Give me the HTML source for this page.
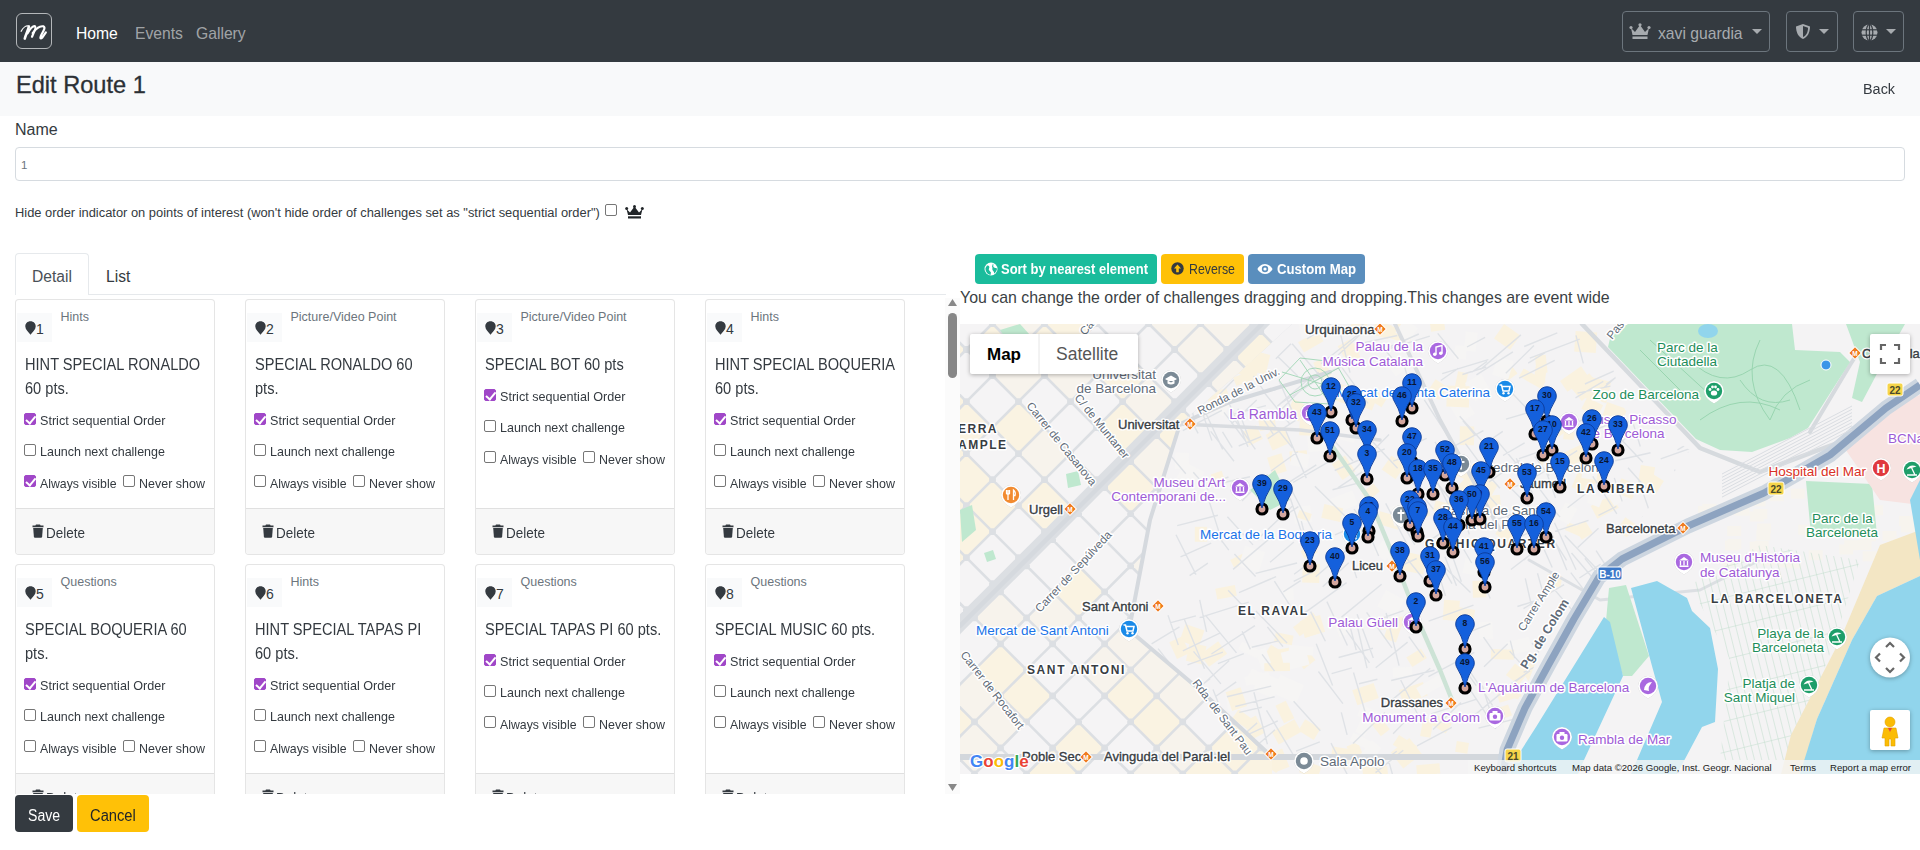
<!DOCTYPE html>
<html><head><meta charset="utf-8">
<style>
*{box-sizing:border-box;margin:0;padding:0}
html,body{width:1920px;height:850px;overflow:hidden;background:#fff;font-family:"Liberation Sans",sans-serif;color:#212529}
.a{position:absolute}
#nav{left:0;top:0;width:1920px;height:62px;background:#343a40}
#logo{left:16px;top:13px;width:36px;height:36px;border:1.6px solid #b4b7ba;border-radius:6px}
.nl{top:26px;font-size:15.7px;color:rgba(255,255,255,.55);white-space:nowrap}
.dd{top:11px;height:41px;border:1px solid #6c757d;border-radius:4px}
.caret{width:0;height:0;border-left:5px solid transparent;border-right:5px solid transparent;border-top:5.5px solid #a7abaf}
#hdr{left:0;top:62px;width:1920px;height:54px;background:#f8f9fa}
.cb{width:12px;height:12px;border:1.3px solid #767676;border-radius:2px;background:#fff}
.cb.on{background:#a047c8;border-color:#a047c8}
.cb.on::after{content:"";position:absolute;left:3.3px;top:0px;width:4px;height:7.5px;border:solid #fff;border-width:0 2.2px 2.2px 0;transform:rotate(40deg)}
.card{width:200px;height:256px;border:1px solid rgba(0,0,0,.1);border-radius:4px;background:#fff;overflow:hidden}
.card .ft{left:0;bottom:0;width:198px;height:46px;background:#f7f7f7;border-top:1px solid rgba(0,0,0,.09)}
.t{white-space:nowrap;line-height:1}
.btn{border-radius:4px;white-space:nowrap}
</style></head><body>
<!-- NAVBAR -->
<div id="nav" class="a">
  <div id="logo" class="a"></div>
  <svg class="a" style="left:12px;top:10px" width="44" height="42" viewBox="0 0 890 850"><g fill="none" stroke="#fff" stroke-linecap="round" stroke-linejoin="round">
  <path d="M185 430 C225 350,290 312,338 328" stroke-width="26"/>
  <path d="M342 335 C318 420,282 500,258 578" stroke-width="52"/>
  <path d="M315 470 C365 385,425 318,465 330 C492 345,462 420,405 540" stroke-width="46"/>
  <path d="M418 470 C485 375,565 315,640 332 C680 352,642 420,595 500 C565 555,562 598,612 560 L685 455" stroke-width="44"/>
  </g></svg>
  <div class="a nl t" style="left:76px;color:#fff">Home</div>
  <div class="a nl t" style="left:135px">Events</div>
  <div class="a nl t" style="left:196px">Gallery</div>
  <div class="a dd" style="left:1622px;width:148px"></div>
  <svg class="a" style="left:1629px;top:23px" width="22" height="17" viewBox="0 0 22 17"><path d="M2 5 L6 9 L11 2 L16 9 L20 5 L18.5 12 L3.5 12 Z" fill="#a7abaf"/><circle cx="2" cy="4.5" r="1.6" fill="#a7abaf"/><circle cx="11" cy="1.8" r="1.6" fill="#a7abaf"/><circle cx="20" cy="4.5" r="1.6" fill="#a7abaf"/><rect x="3.5" y="13.5" width="15" height="2.5" fill="#a7abaf"/></svg>
  <div class="a t" style="left:1658px;top:26px;font-size:15.7px;color:#a7abaf">xavi guardia</div>
  <div class="a caret" style="left:1752px;top:29px"></div>
  <div class="a dd" style="left:1786px;width:52px"></div>
  <svg class="a" style="left:1795px;top:23px" width="16" height="17" viewBox="0 0 16 17"><path d="M8 1 L15 3.5 C15 10,12 14.5,8 16 C4 14.5,1 10,1 3.5 Z" fill="#a7abaf"/><path d="M8 3 L13 4.8 C13 9.5,11 13,8 14 Z" fill="#343a40"/></svg>
  <div class="a caret" style="left:1819px;top:29px"></div>
  <div class="a dd" style="left:1853px;width:51px"></div>
  <svg class="a" style="left:1861px;top:24px" width="17" height="17" viewBox="0 0 17 17"><circle cx="8.5" cy="8.5" r="8" fill="#a7abaf"/><g stroke="#343a40" stroke-width="1.2" fill="none"><ellipse cx="8.5" cy="8.5" rx="3.3" ry="8"/><line x1="0.5" y1="5.8" x2="16.5" y2="5.8"/><line x1="0.5" y1="11.2" x2="16.5" y2="11.2"/><line x1="8.5" y1="0.5" x2="8.5" y2="16.5"/></g></svg>
  <div class="a caret" style="left:1886px;top:29px"></div>
</div>
<!-- HEADER -->
<div id="hdr" class="a"></div>
<div class="a t" style="left:16px;top:74px;font-size:23.6px;color:#2b3035;-webkit-text-stroke:0.3px #2b3035">Edit Route 1</div>
<div class="a t" style="left:1863px;top:80.5px;font-size:15.5px;color:#343a40;transform:scaleX(0.93);transform-origin:0 0">Back</div>
<!-- FORM -->
<div class="a t" style="left:15px;top:121.5px;font-size:16px;color:#343a40">Name</div>
<div class="a" style="left:15px;top:147px;width:1890px;height:34px;border:1px solid #d6dbe0;border-radius:4px;background:#fff"></div>
<div class="a t" style="left:21px;top:160px;font-size:11.5px;color:#6c757d">1</div>
<div class="a t" style="left:15px;top:207px;font-size:12.88px;color:#343a40">Hide order indicator on points of interest (won't hide order of challenges set as "strict sequential order")</div>
<div class="a cb" style="left:605px;top:204px"></div>
<svg class="a" style="left:625px;top:205px" width="19" height="14" viewBox="0 0 19 14"><path d="M1.5 4 L5 7.5 L9.5 1.5 L14 7.5 L17.5 4 L16 10 L3 10 Z" fill="#212529"/><circle cx="1.7" cy="3.6" r="1.5" fill="#212529"/><circle cx="9.5" cy="1.5" r="1.5" fill="#212529"/><circle cx="17.3" cy="3.6" r="1.5" fill="#212529"/><rect x="3" y="11.3" width="13" height="2.2" fill="#212529"/></svg>
<!-- TABS -->
<div class="a" style="left:15px;top:294px;width:931px;height:1px;background:#e6e9ec"></div>
<div class="a" style="left:15px;top:253px;width:74px;height:42px;border:1px solid #e6e9ec;border-bottom:none;border-radius:4px 4px 0 0;background:#fff"></div>
<div class="a t" style="left:32px;top:269px;font-size:15.6px;color:#495057">Detail</div>
<div class="a t" style="left:106px;top:269px;font-size:15.6px;color:#343a40">List</div>
<!-- SCROLL AREA -->
<div id="scroll" class="a" style="left:0;top:298px;width:960px;height:496px;overflow:hidden">
<div class="a card" style="left:15px;top:1px">
<div class="a" style="left:1px;top:13px;width:35px;height:29px;background:#f9fafb"></div>
<svg class="a" style="left:9px;top:21px" width="11" height="14" viewBox="0 0 11 14"><path d="M5.5 0.3 C8.6 0.3,10.7 2.5,10.7 5.4 C10.7 8.3,7.5 11,5.5 13.8 C3.5 11,0.3 8.3,0.3 5.4 C0.3 2.5,2.4 0.3,5.5 0.3 Z" fill="#343a40"/></svg>
<div class="a t" style="left:20px;top:21.5px;font-size:14px;color:#343a40">1</div>
<div class="a t" style="left:44.5px;top:11.2px;font-size:12.5px;color:#6c757d">Hints</div>
<div class="a t" style="left:9px;top:56.5px;font-size:16px;color:#343a40;transform:scaleX(0.912);transform-origin:0 0">HINT SPECIAL RONALDO</div>
<div class="a t" style="left:9px;top:80.5px;font-size:16px;color:#343a40;transform:scaleX(0.912);transform-origin:0 0">60 pts.</div>
<div class="a cb on" style="left:8px;top:112.5px"></div>
<div class="a t" style="left:24px;top:114.0px;font-size:13px;color:#343a40;transform:scaleX(0.97);transform-origin:0 0">Strict sequential Order</div>
<div class="a cb" style="left:8px;top:143.5px"></div>
<div class="a t" style="left:24px;top:145.0px;font-size:13px;color:#343a40;transform:scaleX(0.96);transform-origin:0 0">Launch next challenge</div>
<div class="a cb on" style="left:8px;top:175.4px"></div>
<div class="a t" style="left:24px;top:176.9px;font-size:13px;color:#343a40;transform:scaleX(0.945);transform-origin:0 0">Always visible</div>
<div class="a cb" style="left:106.5px;top:175.4px"></div>
<div class="a t" style="left:122.5px;top:176.9px;font-size:13px;color:#343a40;transform:scaleX(0.96);transform-origin:0 0">Never show</div>
<div class="a ft">
<svg class="a" style="left:16px;top:15px" width="12" height="14" viewBox="0 0 12 14"><path d="M4 0.5 H8 L8.6 1.6 H11.5 V3.3 H0.5 V1.6 H3.4 Z" fill="#343a40"/><path d="M1.2 4 H10.8 L10.1 13 C10 13.5,9.6 13.8,9.1 13.8 H2.9 C2.4 13.8,2 13.5,1.9 13 Z" fill="#343a40"/></svg>
<div class="a t" style="left:29.5px;top:17.3px;font-size:14.5px;color:#343a40;transform:scaleX(0.93);transform-origin:0 0">Delete</div>
</div>
</div>
<div class="a card" style="left:245px;top:1px">
<div class="a" style="left:1px;top:13px;width:35px;height:29px;background:#f9fafb"></div>
<svg class="a" style="left:9px;top:21px" width="11" height="14" viewBox="0 0 11 14"><path d="M5.5 0.3 C8.6 0.3,10.7 2.5,10.7 5.4 C10.7 8.3,7.5 11,5.5 13.8 C3.5 11,0.3 8.3,0.3 5.4 C0.3 2.5,2.4 0.3,5.5 0.3 Z" fill="#343a40"/></svg>
<div class="a t" style="left:20px;top:21.5px;font-size:14px;color:#343a40">2</div>
<div class="a t" style="left:44.5px;top:11.2px;font-size:12.5px;color:#6c757d">Picture/Video Point</div>
<div class="a t" style="left:9px;top:56.5px;font-size:16px;color:#343a40;transform:scaleX(0.912);transform-origin:0 0">SPECIAL RONALDO 60</div>
<div class="a t" style="left:9px;top:80.5px;font-size:16px;color:#343a40;transform:scaleX(0.912);transform-origin:0 0">pts.</div>
<div class="a cb on" style="left:8px;top:112.5px"></div>
<div class="a t" style="left:24px;top:114.0px;font-size:13px;color:#343a40;transform:scaleX(0.97);transform-origin:0 0">Strict sequential Order</div>
<div class="a cb" style="left:8px;top:143.5px"></div>
<div class="a t" style="left:24px;top:145.0px;font-size:13px;color:#343a40;transform:scaleX(0.96);transform-origin:0 0">Launch next challenge</div>
<div class="a cb" style="left:8px;top:175.4px"></div>
<div class="a t" style="left:24px;top:176.9px;font-size:13px;color:#343a40;transform:scaleX(0.945);transform-origin:0 0">Always visible</div>
<div class="a cb" style="left:106.5px;top:175.4px"></div>
<div class="a t" style="left:122.5px;top:176.9px;font-size:13px;color:#343a40;transform:scaleX(0.96);transform-origin:0 0">Never show</div>
<div class="a ft">
<svg class="a" style="left:16px;top:15px" width="12" height="14" viewBox="0 0 12 14"><path d="M4 0.5 H8 L8.6 1.6 H11.5 V3.3 H0.5 V1.6 H3.4 Z" fill="#343a40"/><path d="M1.2 4 H10.8 L10.1 13 C10 13.5,9.6 13.8,9.1 13.8 H2.9 C2.4 13.8,2 13.5,1.9 13 Z" fill="#343a40"/></svg>
<div class="a t" style="left:29.5px;top:17.3px;font-size:14.5px;color:#343a40;transform:scaleX(0.93);transform-origin:0 0">Delete</div>
</div>
</div>
<div class="a card" style="left:475px;top:1px">
<div class="a" style="left:1px;top:13px;width:35px;height:29px;background:#f9fafb"></div>
<svg class="a" style="left:9px;top:21px" width="11" height="14" viewBox="0 0 11 14"><path d="M5.5 0.3 C8.6 0.3,10.7 2.5,10.7 5.4 C10.7 8.3,7.5 11,5.5 13.8 C3.5 11,0.3 8.3,0.3 5.4 C0.3 2.5,2.4 0.3,5.5 0.3 Z" fill="#343a40"/></svg>
<div class="a t" style="left:20px;top:21.5px;font-size:14px;color:#343a40">3</div>
<div class="a t" style="left:44.5px;top:11.2px;font-size:12.5px;color:#6c757d">Picture/Video Point</div>
<div class="a t" style="left:9px;top:56.5px;font-size:16px;color:#343a40;transform:scaleX(0.912);transform-origin:0 0">SPECIAL BOT 60 pts</div>
<div class="a cb on" style="left:8px;top:88.5px"></div>
<div class="a t" style="left:24px;top:90.0px;font-size:13px;color:#343a40;transform:scaleX(0.97);transform-origin:0 0">Strict sequential Order</div>
<div class="a cb" style="left:8px;top:119.5px"></div>
<div class="a t" style="left:24px;top:121.0px;font-size:13px;color:#343a40;transform:scaleX(0.96);transform-origin:0 0">Launch next challenge</div>
<div class="a cb" style="left:8px;top:151.4px"></div>
<div class="a t" style="left:24px;top:152.9px;font-size:13px;color:#343a40;transform:scaleX(0.945);transform-origin:0 0">Always visible</div>
<div class="a cb" style="left:106.5px;top:151.4px"></div>
<div class="a t" style="left:122.5px;top:152.9px;font-size:13px;color:#343a40;transform:scaleX(0.96);transform-origin:0 0">Never show</div>
<div class="a ft">
<svg class="a" style="left:16px;top:15px" width="12" height="14" viewBox="0 0 12 14"><path d="M4 0.5 H8 L8.6 1.6 H11.5 V3.3 H0.5 V1.6 H3.4 Z" fill="#343a40"/><path d="M1.2 4 H10.8 L10.1 13 C10 13.5,9.6 13.8,9.1 13.8 H2.9 C2.4 13.8,2 13.5,1.9 13 Z" fill="#343a40"/></svg>
<div class="a t" style="left:29.5px;top:17.3px;font-size:14.5px;color:#343a40;transform:scaleX(0.93);transform-origin:0 0">Delete</div>
</div>
</div>
<div class="a card" style="left:705px;top:1px">
<div class="a" style="left:1px;top:13px;width:35px;height:29px;background:#f9fafb"></div>
<svg class="a" style="left:9px;top:21px" width="11" height="14" viewBox="0 0 11 14"><path d="M5.5 0.3 C8.6 0.3,10.7 2.5,10.7 5.4 C10.7 8.3,7.5 11,5.5 13.8 C3.5 11,0.3 8.3,0.3 5.4 C0.3 2.5,2.4 0.3,5.5 0.3 Z" fill="#343a40"/></svg>
<div class="a t" style="left:20px;top:21.5px;font-size:14px;color:#343a40">4</div>
<div class="a t" style="left:44.5px;top:11.2px;font-size:12.5px;color:#6c757d">Hints</div>
<div class="a t" style="left:9px;top:56.5px;font-size:16px;color:#343a40;transform:scaleX(0.912);transform-origin:0 0">HINT SPECIAL BOQUERIA</div>
<div class="a t" style="left:9px;top:80.5px;font-size:16px;color:#343a40;transform:scaleX(0.912);transform-origin:0 0">60 pts.</div>
<div class="a cb on" style="left:8px;top:112.5px"></div>
<div class="a t" style="left:24px;top:114.0px;font-size:13px;color:#343a40;transform:scaleX(0.97);transform-origin:0 0">Strict sequential Order</div>
<div class="a cb" style="left:8px;top:143.5px"></div>
<div class="a t" style="left:24px;top:145.0px;font-size:13px;color:#343a40;transform:scaleX(0.96);transform-origin:0 0">Launch next challenge</div>
<div class="a cb" style="left:8px;top:175.4px"></div>
<div class="a t" style="left:24px;top:176.9px;font-size:13px;color:#343a40;transform:scaleX(0.945);transform-origin:0 0">Always visible</div>
<div class="a cb" style="left:106.5px;top:175.4px"></div>
<div class="a t" style="left:122.5px;top:176.9px;font-size:13px;color:#343a40;transform:scaleX(0.96);transform-origin:0 0">Never show</div>
<div class="a ft">
<svg class="a" style="left:16px;top:15px" width="12" height="14" viewBox="0 0 12 14"><path d="M4 0.5 H8 L8.6 1.6 H11.5 V3.3 H0.5 V1.6 H3.4 Z" fill="#343a40"/><path d="M1.2 4 H10.8 L10.1 13 C10 13.5,9.6 13.8,9.1 13.8 H2.9 C2.4 13.8,2 13.5,1.9 13 Z" fill="#343a40"/></svg>
<div class="a t" style="left:29.5px;top:17.3px;font-size:14.5px;color:#343a40;transform:scaleX(0.93);transform-origin:0 0">Delete</div>
</div>
</div>
<div class="a card" style="left:15px;top:266px">
<div class="a" style="left:1px;top:13px;width:35px;height:29px;background:#f9fafb"></div>
<svg class="a" style="left:9px;top:21px" width="11" height="14" viewBox="0 0 11 14"><path d="M5.5 0.3 C8.6 0.3,10.7 2.5,10.7 5.4 C10.7 8.3,7.5 11,5.5 13.8 C3.5 11,0.3 8.3,0.3 5.4 C0.3 2.5,2.4 0.3,5.5 0.3 Z" fill="#343a40"/></svg>
<div class="a t" style="left:20px;top:21.5px;font-size:14px;color:#343a40">5</div>
<div class="a t" style="left:44.5px;top:11.2px;font-size:12.5px;color:#6c757d">Questions</div>
<div class="a t" style="left:9px;top:56.5px;font-size:16px;color:#343a40;transform:scaleX(0.912);transform-origin:0 0">SPECIAL BOQUERIA 60</div>
<div class="a t" style="left:9px;top:80.5px;font-size:16px;color:#343a40;transform:scaleX(0.912);transform-origin:0 0">pts.</div>
<div class="a cb on" style="left:8px;top:112.5px"></div>
<div class="a t" style="left:24px;top:114.0px;font-size:13px;color:#343a40;transform:scaleX(0.97);transform-origin:0 0">Strict sequential Order</div>
<div class="a cb" style="left:8px;top:143.5px"></div>
<div class="a t" style="left:24px;top:145.0px;font-size:13px;color:#343a40;transform:scaleX(0.96);transform-origin:0 0">Launch next challenge</div>
<div class="a cb" style="left:8px;top:175.4px"></div>
<div class="a t" style="left:24px;top:176.9px;font-size:13px;color:#343a40;transform:scaleX(0.945);transform-origin:0 0">Always visible</div>
<div class="a cb" style="left:106.5px;top:175.4px"></div>
<div class="a t" style="left:122.5px;top:176.9px;font-size:13px;color:#343a40;transform:scaleX(0.96);transform-origin:0 0">Never show</div>
<div class="a ft">
<svg class="a" style="left:16px;top:15px" width="12" height="14" viewBox="0 0 12 14"><path d="M4 0.5 H8 L8.6 1.6 H11.5 V3.3 H0.5 V1.6 H3.4 Z" fill="#343a40"/><path d="M1.2 4 H10.8 L10.1 13 C10 13.5,9.6 13.8,9.1 13.8 H2.9 C2.4 13.8,2 13.5,1.9 13 Z" fill="#343a40"/></svg>
<div class="a t" style="left:29.5px;top:17.3px;font-size:14.5px;color:#343a40;transform:scaleX(0.93);transform-origin:0 0">Delete</div>
</div>
</div>
<div class="a card" style="left:245px;top:266px">
<div class="a" style="left:1px;top:13px;width:35px;height:29px;background:#f9fafb"></div>
<svg class="a" style="left:9px;top:21px" width="11" height="14" viewBox="0 0 11 14"><path d="M5.5 0.3 C8.6 0.3,10.7 2.5,10.7 5.4 C10.7 8.3,7.5 11,5.5 13.8 C3.5 11,0.3 8.3,0.3 5.4 C0.3 2.5,2.4 0.3,5.5 0.3 Z" fill="#343a40"/></svg>
<div class="a t" style="left:20px;top:21.5px;font-size:14px;color:#343a40">6</div>
<div class="a t" style="left:44.5px;top:11.2px;font-size:12.5px;color:#6c757d">Hints</div>
<div class="a t" style="left:9px;top:56.5px;font-size:16px;color:#343a40;transform:scaleX(0.912);transform-origin:0 0">HINT SPECIAL TAPAS PI</div>
<div class="a t" style="left:9px;top:80.5px;font-size:16px;color:#343a40;transform:scaleX(0.912);transform-origin:0 0">60 pts.</div>
<div class="a cb on" style="left:8px;top:112.5px"></div>
<div class="a t" style="left:24px;top:114.0px;font-size:13px;color:#343a40;transform:scaleX(0.97);transform-origin:0 0">Strict sequential Order</div>
<div class="a cb" style="left:8px;top:143.5px"></div>
<div class="a t" style="left:24px;top:145.0px;font-size:13px;color:#343a40;transform:scaleX(0.96);transform-origin:0 0">Launch next challenge</div>
<div class="a cb" style="left:8px;top:175.4px"></div>
<div class="a t" style="left:24px;top:176.9px;font-size:13px;color:#343a40;transform:scaleX(0.945);transform-origin:0 0">Always visible</div>
<div class="a cb" style="left:106.5px;top:175.4px"></div>
<div class="a t" style="left:122.5px;top:176.9px;font-size:13px;color:#343a40;transform:scaleX(0.96);transform-origin:0 0">Never show</div>
<div class="a ft">
<svg class="a" style="left:16px;top:15px" width="12" height="14" viewBox="0 0 12 14"><path d="M4 0.5 H8 L8.6 1.6 H11.5 V3.3 H0.5 V1.6 H3.4 Z" fill="#343a40"/><path d="M1.2 4 H10.8 L10.1 13 C10 13.5,9.6 13.8,9.1 13.8 H2.9 C2.4 13.8,2 13.5,1.9 13 Z" fill="#343a40"/></svg>
<div class="a t" style="left:29.5px;top:17.3px;font-size:14.5px;color:#343a40;transform:scaleX(0.93);transform-origin:0 0">Delete</div>
</div>
</div>
<div class="a card" style="left:475px;top:266px">
<div class="a" style="left:1px;top:13px;width:35px;height:29px;background:#f9fafb"></div>
<svg class="a" style="left:9px;top:21px" width="11" height="14" viewBox="0 0 11 14"><path d="M5.5 0.3 C8.6 0.3,10.7 2.5,10.7 5.4 C10.7 8.3,7.5 11,5.5 13.8 C3.5 11,0.3 8.3,0.3 5.4 C0.3 2.5,2.4 0.3,5.5 0.3 Z" fill="#343a40"/></svg>
<div class="a t" style="left:20px;top:21.5px;font-size:14px;color:#343a40">7</div>
<div class="a t" style="left:44.5px;top:11.2px;font-size:12.5px;color:#6c757d">Questions</div>
<div class="a t" style="left:9px;top:56.5px;font-size:16px;color:#343a40;transform:scaleX(0.912);transform-origin:0 0">SPECIAL TAPAS PI 60 pts.</div>
<div class="a cb on" style="left:8px;top:88.5px"></div>
<div class="a t" style="left:24px;top:90.0px;font-size:13px;color:#343a40;transform:scaleX(0.97);transform-origin:0 0">Strict sequential Order</div>
<div class="a cb" style="left:8px;top:119.5px"></div>
<div class="a t" style="left:24px;top:121.0px;font-size:13px;color:#343a40;transform:scaleX(0.96);transform-origin:0 0">Launch next challenge</div>
<div class="a cb" style="left:8px;top:151.4px"></div>
<div class="a t" style="left:24px;top:152.9px;font-size:13px;color:#343a40;transform:scaleX(0.945);transform-origin:0 0">Always visible</div>
<div class="a cb" style="left:106.5px;top:151.4px"></div>
<div class="a t" style="left:122.5px;top:152.9px;font-size:13px;color:#343a40;transform:scaleX(0.96);transform-origin:0 0">Never show</div>
<div class="a ft">
<svg class="a" style="left:16px;top:15px" width="12" height="14" viewBox="0 0 12 14"><path d="M4 0.5 H8 L8.6 1.6 H11.5 V3.3 H0.5 V1.6 H3.4 Z" fill="#343a40"/><path d="M1.2 4 H10.8 L10.1 13 C10 13.5,9.6 13.8,9.1 13.8 H2.9 C2.4 13.8,2 13.5,1.9 13 Z" fill="#343a40"/></svg>
<div class="a t" style="left:29.5px;top:17.3px;font-size:14.5px;color:#343a40;transform:scaleX(0.93);transform-origin:0 0">Delete</div>
</div>
</div>
<div class="a card" style="left:705px;top:266px">
<div class="a" style="left:1px;top:13px;width:35px;height:29px;background:#f9fafb"></div>
<svg class="a" style="left:9px;top:21px" width="11" height="14" viewBox="0 0 11 14"><path d="M5.5 0.3 C8.6 0.3,10.7 2.5,10.7 5.4 C10.7 8.3,7.5 11,5.5 13.8 C3.5 11,0.3 8.3,0.3 5.4 C0.3 2.5,2.4 0.3,5.5 0.3 Z" fill="#343a40"/></svg>
<div class="a t" style="left:20px;top:21.5px;font-size:14px;color:#343a40">8</div>
<div class="a t" style="left:44.5px;top:11.2px;font-size:12.5px;color:#6c757d">Questions</div>
<div class="a t" style="left:9px;top:56.5px;font-size:16px;color:#343a40;transform:scaleX(0.912);transform-origin:0 0">SPECIAL MUSIC 60 pts.</div>
<div class="a cb on" style="left:8px;top:88.5px"></div>
<div class="a t" style="left:24px;top:90.0px;font-size:13px;color:#343a40;transform:scaleX(0.97);transform-origin:0 0">Strict sequential Order</div>
<div class="a cb" style="left:8px;top:119.5px"></div>
<div class="a t" style="left:24px;top:121.0px;font-size:13px;color:#343a40;transform:scaleX(0.96);transform-origin:0 0">Launch next challenge</div>
<div class="a cb" style="left:8px;top:151.4px"></div>
<div class="a t" style="left:24px;top:152.9px;font-size:13px;color:#343a40;transform:scaleX(0.945);transform-origin:0 0">Always visible</div>
<div class="a cb" style="left:106.5px;top:151.4px"></div>
<div class="a t" style="left:122.5px;top:152.9px;font-size:13px;color:#343a40;transform:scaleX(0.96);transform-origin:0 0">Never show</div>
<div class="a ft">
<svg class="a" style="left:16px;top:15px" width="12" height="14" viewBox="0 0 12 14"><path d="M4 0.5 H8 L8.6 1.6 H11.5 V3.3 H0.5 V1.6 H3.4 Z" fill="#343a40"/><path d="M1.2 4 H10.8 L10.1 13 C10 13.5,9.6 13.8,9.1 13.8 H2.9 C2.4 13.8,2 13.5,1.9 13 Z" fill="#343a40"/></svg>
<div class="a t" style="left:29.5px;top:17.3px;font-size:14.5px;color:#343a40;transform:scaleX(0.93);transform-origin:0 0">Delete</div>
</div>
</div>
</div>
<!-- scrollbar -->
<div class="a" style="left:945px;top:298px;width:15px;height:496px;background:#fbfbfb"></div>
<svg class="a" style="left:947px;top:298px" width="11" height="10"><path d="M5.5 1 L10 8 L1 8 Z" fill="#888"/></svg>
<div class="a" style="left:948px;top:313px;width:9px;height:65px;border-radius:5px;background:#878787"></div>
<svg class="a" style="left:947px;top:783px" width="11" height="10"><path d="M1 1 L10 1 L5.5 8 Z" fill="#888"/></svg>
<!-- BUTTONS -->
<div class="a btn" style="left:15px;top:795px;width:58px;height:37px;background:#343a40"></div>
<div class="a t" style="left:28px;top:807.5px;font-size:16px;color:#fff;transform:scaleX(0.88);transform-origin:0 0">Save</div>
<div class="a btn" style="left:77px;top:795px;width:72px;height:37px;background:#ffc107"></div>
<div class="a t" style="left:90px;top:807.5px;font-size:16px;color:#212529;transform:scaleX(0.92);transform-origin:0 0">Cancel</div>
<!-- RIGHT TOOLS -->
<div class="a btn" style="left:975px;top:254px;width:182px;height:30px;background:#1abc9c"></div>
<svg class="a" style="left:984px;top:262px" width="14" height="14" viewBox="0 0 14 14"><circle cx="7" cy="7" r="6.5" fill="#fff"/><path d="M3 3.5 C5 3,6 5,5 6.5 C4 8,6 9,7 10.5 L6.5 13 C3 12,1.2 9,1.5 6 Z M9 1.5 C10 3,8.5 4.5,10 5.5 C11.5 6.5,12.5 5,13 7 C12.5 9.5,11 11,10 11.5 C10.5 9.5,9 9,8.5 8 C8 6.5,9 6,8 4.5 Z" fill="#1abc9c"/></svg>
<div class="a t" style="left:1001px;top:261.8px;font-size:14.5px;font-weight:bold;color:#fff;transform:scaleX(0.894);transform-origin:0 0">Sort by nearest element</div>
<div class="a btn" style="left:1161px;top:254px;width:83px;height:30px;background:#ffc107"></div>
<svg class="a" style="left:1171px;top:262px" width="13" height="13" viewBox="0 0 13 13"><circle cx="6.5" cy="6.5" r="6.2" fill="#343a40"/><path d="M6.5 2.6 L10 6.4 L7.8 6.4 L7.8 10.2 L5.2 10.2 L5.2 6.4 L3 6.4 Z" fill="#ffc107"/></svg>
<div class="a t" style="left:1188.5px;top:261.8px;font-size:14.5px;color:#343a40;transform:scaleX(0.85);transform-origin:0 0">Reverse</div>
<div class="a btn" style="left:1248px;top:254px;width:117px;height:30px;background:#5a8ebd"></div>
<svg class="a" style="left:1257px;top:263px" width="16" height="12" viewBox="0 0 16 12"><path d="M8 1 C12 1,15 4.5,15.5 6 C15 7.5,12 11,8 11 C4 11,1 7.5,0.5 6 C1 4.5,4 1,8 1 Z" fill="#fff"/><circle cx="8" cy="6" r="3.2" fill="#5a8ebd"/><circle cx="8" cy="6" r="1.6" fill="#fff"/></svg>
<div class="a t" style="left:1276.5px;top:261.8px;font-size:14.5px;font-weight:bold;color:#fff;transform:scaleX(0.908);transform-origin:0 0">Custom Map</div>
<div class="a t" style="left:960px;top:290.3px;font-size:15.9px;color:#3a3f44">You can change the order of challenges dragging and dropping.This changes are event wide</div>
<!-- MAP -->
<div id="map" class="a" style="left:960px;top:324px;width:960px;height:450px;overflow:hidden;background:#f2f1f2">
<svg class="a" style="left:0;top:0" width="960" height="450" viewBox="0 0 960 450" font-family="Liberation Sans, sans-serif">
<defs>
<pattern id="grid" patternUnits="userSpaceOnUse" width="37" height="37" patternTransform="rotate(45)">
<rect width="37" height="37" fill="none"/>
<path d="M0 0 H37 M0 0 V37" stroke="#d9dde2" stroke-width="2.2"/>
</pattern>
<pattern id="bgrid" patternUnits="userSpaceOnUse" width="7" height="30" patternTransform="rotate(-14)">
<path d="M0 0 V30 M0 0 H7" stroke="#c2decd" stroke-width="1.1"/>
</pattern>
</defs>
<rect width="960" height="450" fill="#f4f3f4"/>
<clipPath id="eix"><polygon points="0.0,0.0 332.0,0.0 280.0,48.0 220.0,100.0 190.0,196.0 169.0,306.0 240.0,366.0 312.0,433.0 312.0,450.0 0.0,450.0"/></clipPath>
<g clip-path="url(#eix)">
<rect width="960" height="450" fill="#dcdfe3"/>
<polygon points="-18.0,-49.1 3.0,-28.1 3.0,-25.0 -18.0,-3.9 -21.1,-3.9 -42.2,-25.0 -42.2,-28.1 -21.1,-49.1" fill="#f7f3ec"/>
<polygon points="34.0,-49.1 55.1,-28.1 55.1,-25.0 34.0,-3.9 30.9,-3.9 9.8,-25.0 9.8,-28.1 30.9,-49.1" fill="#faf3e2"/>
<polygon points="8.0,-23.1 29.1,-2.1 29.1,1.1 8.0,22.1 4.9,22.1 -16.2,1.1 -16.2,-2.1 4.9,-23.1" fill="#f5f4f5"/>
<polygon points="-18.0,2.9 3.0,24.0 3.0,27.1 -18.0,48.2 -21.1,48.2 -42.2,27.1 -42.2,24.0 -21.1,2.9" fill="#faf3e2"/>
<polygon points="86.1,-49.1 107.1,-28.1 107.1,-25.0 86.1,-3.9 82.9,-3.9 61.9,-25.0 61.9,-28.1 82.9,-49.1" fill="#f5f4f5"/>
<polygon points="60.0,-23.1 81.1,-2.1 81.1,1.1 60.0,22.1 56.9,22.1 35.9,1.1 35.9,-2.1 56.9,-23.1" fill="#f7f3ec"/>
<polygon points="34.0,2.9 55.1,24.0 55.1,27.1 34.0,48.2 30.9,48.2 9.8,27.1 9.8,24.0 30.9,2.9" fill="#faf3e2"/>
<polygon points="8.0,28.9 29.1,50.0 29.1,53.1 8.0,74.2 4.9,74.2 -16.2,53.1 -16.2,50.0 4.9,28.9" fill="#f5f4f5"/>
<polygon points="-18.0,54.9 3.0,76.0 3.0,79.1 -18.0,100.2 -21.1,100.2 -42.2,79.1 -42.2,76.0 -21.1,54.9" fill="#faf3e2"/>
<polygon points="138.1,-49.1 159.2,-28.1 159.2,-25.0 138.1,-3.9 135.0,-3.9 113.9,-25.0 113.9,-28.1 135.0,-49.1" fill="#f7f3ec"/>
<polygon points="112.1,-23.1 133.1,-2.1 133.1,1.1 112.1,22.1 109.0,22.1 87.9,1.1 87.9,-2.1 109.0,-23.1" fill="#faf3e2"/>
<polygon points="86.1,2.9 107.1,24.0 107.1,27.1 86.1,48.2 82.9,48.2 61.9,27.1 61.9,24.0 82.9,2.9" fill="#faf3e2"/>
<polygon points="60.0,28.9 81.1,50.0 81.1,53.1 60.0,74.2 56.9,74.2 35.9,53.1 35.9,50.0 56.9,28.9" fill="#f7f3ec"/>
<polygon points="34.0,54.9 55.1,76.0 55.1,79.1 34.0,100.2 30.9,100.2 9.8,79.1 9.8,76.0 30.9,54.9" fill="#f5f4f5"/>
<polygon points="8.0,81.0 29.1,102.0 29.1,105.1 8.0,126.2 4.9,126.2 -16.2,105.1 -16.2,102.0 4.9,81.0" fill="#faf3e2"/>
<polygon points="-18.0,107.0 3.0,128.1 3.0,131.2 -18.0,152.2 -21.1,152.2 -42.2,131.2 -42.2,128.1 -21.1,107.0" fill="#faf3e2"/>
<polygon points="190.1,-49.1 211.2,-28.1 211.2,-25.0 190.1,-3.9 187.0,-3.9 166.0,-25.0 166.0,-28.1 187.0,-49.1" fill="#f5f4f5"/>
<polygon points="164.1,-23.1 185.2,-2.1 185.2,1.1 164.1,22.1 161.0,22.1 139.9,1.1 139.9,-2.1 161.0,-23.1" fill="#f5f4f5"/>
<polygon points="138.1,2.9 159.2,24.0 159.2,27.1 138.1,48.2 135.0,48.2 113.9,27.1 113.9,24.0 135.0,2.9" fill="#f5f4f5"/>
<polygon points="112.1,28.9 133.1,50.0 133.1,53.1 112.1,74.2 109.0,74.2 87.9,53.1 87.9,50.0 109.0,28.9" fill="#f7f3ec"/>
<polygon points="86.1,54.9 107.1,76.0 107.1,79.1 86.1,100.2 82.9,100.2 61.9,79.1 61.9,76.0 82.9,54.9" fill="#f5f4f5"/>
<polygon points="60.0,81.0 81.1,102.0 81.1,105.1 60.0,126.2 56.9,126.2 35.9,105.1 35.9,102.0 56.9,81.0" fill="#faf3e2"/>
<polygon points="34.0,107.0 55.1,128.1 55.1,131.2 34.0,152.2 30.9,152.2 9.8,131.2 9.8,128.1 30.9,107.0" fill="#f5f4f5"/>
<polygon points="8.0,133.0 29.1,154.1 29.1,157.2 8.0,178.3 4.9,178.3 -16.2,157.2 -16.2,154.1 4.9,133.0" fill="#faf3e2"/>
<polygon points="-18.0,159.0 3.0,180.1 3.0,183.2 -18.0,204.3 -21.1,204.3 -42.2,183.2 -42.2,180.1 -21.1,159.0" fill="#faf3e2"/>
<polygon points="242.2,-49.1 263.3,-28.1 263.3,-25.0 242.2,-3.9 239.1,-3.9 218.0,-25.0 218.0,-28.1 239.1,-49.1" fill="#faf3e2"/>
<polygon points="216.2,-23.1 237.2,-2.1 237.2,1.1 216.2,22.1 213.1,22.1 192.0,1.1 192.0,-2.1 213.1,-23.1" fill="#f7f3ec"/>
<polygon points="190.1,2.9 211.2,24.0 211.2,27.1 190.1,48.2 187.0,48.2 166.0,27.1 166.0,24.0 187.0,2.9" fill="#f5f4f5"/>
<polygon points="164.1,28.9 185.2,50.0 185.2,53.1 164.1,74.2 161.0,74.2 139.9,53.1 139.9,50.0 161.0,28.9" fill="#faf3e2"/>
<polygon points="138.1,54.9 159.2,76.0 159.2,79.1 138.1,100.2 135.0,100.2 113.9,79.1 113.9,76.0 135.0,54.9" fill="#f5f4f5"/>
<polygon points="112.1,81.0 133.1,102.0 133.1,105.1 112.1,126.2 109.0,126.2 87.9,105.1 87.9,102.0 109.0,81.0" fill="#f5f4f5"/>
<polygon points="86.1,107.0 107.1,128.1 107.1,131.2 86.1,152.2 82.9,152.2 61.9,131.2 61.9,128.1 82.9,107.0" fill="#f7f3ec"/>
<polygon points="60.0,133.0 81.1,154.1 81.1,157.2 60.0,178.3 56.9,178.3 35.9,157.2 35.9,154.1 56.9,133.0" fill="#f5f4f5"/>
<polygon points="34.0,159.0 55.1,180.1 55.1,183.2 34.0,204.3 30.9,204.3 9.8,183.2 9.8,180.1 30.9,159.0" fill="#faf3e2"/>
<polygon points="8.0,185.0 29.1,206.1 29.1,209.2 8.0,230.3 4.9,230.3 -16.2,209.2 -16.2,206.1 4.9,185.0" fill="#faf3e2"/>
<polygon points="-18.0,211.1 3.0,232.1 3.0,235.3 -18.0,256.3 -21.1,256.3 -42.2,235.3 -42.2,232.1 -21.1,211.1" fill="#faf3e2"/>
<polygon points="294.2,-49.1 315.3,-28.1 315.3,-25.0 294.2,-3.9 291.1,-3.9 270.0,-25.0 270.0,-28.1 291.1,-49.1" fill="#f5f4f5"/>
<polygon points="268.2,-23.1 289.3,-2.1 289.3,1.1 268.2,22.1 265.1,22.1 244.0,1.1 244.0,-2.1 265.1,-23.1" fill="#f7f3ec"/>
<polygon points="242.2,2.9 263.3,24.0 263.3,27.1 242.2,48.2 239.1,48.2 218.0,27.1 218.0,24.0 239.1,2.9" fill="#f7f3ec"/>
<polygon points="216.2,28.9 237.2,50.0 237.2,53.1 216.2,74.2 213.1,74.2 192.0,53.1 192.0,50.0 213.1,28.9" fill="#f5f4f5"/>
<polygon points="190.1,54.9 211.2,76.0 211.2,79.1 190.1,100.2 187.0,100.2 166.0,79.1 166.0,76.0 187.0,54.9" fill="#f7f3ec"/>
<polygon points="164.1,81.0 185.2,102.0 185.2,105.1 164.1,126.2 161.0,126.2 139.9,105.1 139.9,102.0 161.0,81.0" fill="#faf3e2"/>
<polygon points="138.1,107.0 159.2,128.1 159.2,131.2 138.1,152.2 135.0,152.2 113.9,131.2 113.9,128.1 135.0,107.0" fill="#f5f4f5"/>
<polygon points="112.1,133.0 133.1,154.1 133.1,157.2 112.1,178.3 109.0,178.3 87.9,157.2 87.9,154.1 109.0,133.0" fill="#f5f4f5"/>
<polygon points="86.1,159.0 107.1,180.1 107.1,183.2 86.1,204.3 82.9,204.3 61.9,183.2 61.9,180.1 82.9,159.0" fill="#faf3e2"/>
<polygon points="60.0,185.0 81.1,206.1 81.1,209.2 60.0,230.3 56.9,230.3 35.9,209.2 35.9,206.1 56.9,185.0" fill="#f5f4f5"/>
<polygon points="34.0,211.1 55.1,232.1 55.1,235.3 34.0,256.3 30.9,256.3 9.8,235.3 9.8,232.1 30.9,211.1" fill="#f5f4f5"/>
<polygon points="8.0,237.1 29.1,258.2 29.1,261.3 8.0,282.3 4.9,282.3 -16.2,261.3 -16.2,258.2 4.9,237.1" fill="#f5f4f5"/>
<polygon points="-18.0,263.1 3.0,284.2 3.0,287.3 -18.0,308.4 -21.1,308.4 -42.2,287.3 -42.2,284.2 -21.1,263.1" fill="#f5f4f5"/>
<polygon points="354.3,-41.1 375.4,-20.0 375.4,-16.9 354.3,4.2 351.2,4.2 330.1,-16.9 330.1,-20.0 351.2,-41.1" fill="#faf3e2"/>
<polygon points="328.3,-15.1 349.4,6.0 349.4,9.1 328.3,30.2 325.2,30.2 304.1,9.1 304.1,6.0 325.2,-15.1" fill="#f5f4f5"/>
<polygon points="302.3,11.0 323.4,32.0 323.4,35.1 302.3,56.2 299.2,56.2 278.1,35.1 278.1,32.0 299.2,11.0" fill="#faf3e2"/>
<polygon points="276.3,37.0 297.3,58.1 297.3,61.2 276.3,82.2 273.2,82.2 252.1,61.2 252.1,58.1 273.2,37.0" fill="#f7f3ec"/>
<polygon points="250.2,63.0 271.3,84.1 271.3,87.2 250.2,108.3 247.1,108.3 226.1,87.2 226.1,84.1 247.1,63.0" fill="#f5f4f5"/>
<polygon points="224.2,89.0 245.3,110.1 245.3,113.2 224.2,134.3 221.1,134.3 200.0,113.2 200.0,110.1 221.1,89.0" fill="#faf3e2"/>
<polygon points="198.2,115.0 219.3,136.1 219.3,139.2 198.2,160.3 195.1,160.3 174.0,139.2 174.0,136.1 195.1,115.0" fill="#f7f3ec"/>
<polygon points="172.2,141.1 193.3,162.1 193.3,165.3 172.2,186.3 169.1,186.3 148.0,165.3 148.0,162.1 169.1,141.1" fill="#faf3e2"/>
<polygon points="146.2,167.1 167.2,188.2 167.2,191.3 146.2,212.3 143.0,212.3 122.0,191.3 122.0,188.2 143.0,167.1" fill="#f5f4f5"/>
<polygon points="120.1,193.1 141.2,214.2 141.2,217.3 120.1,238.4 117.0,238.4 96.0,217.3 96.0,214.2 117.0,193.1" fill="#f5f4f5"/>
<polygon points="94.1,219.1 115.2,240.2 115.2,243.3 94.1,264.4 91.0,264.4 69.9,243.3 69.9,240.2 91.0,219.1" fill="#f5f4f5"/>
<polygon points="68.1,245.2 89.2,266.2 89.2,269.3 68.1,290.4 65.0,290.4 43.9,269.3 43.9,266.2 65.0,245.2" fill="#f5f4f5"/>
<polygon points="42.1,271.2 63.1,292.2 63.1,295.4 42.1,316.4 39.0,316.4 17.9,295.4 17.9,292.2 39.0,271.2" fill="#f7f3ec"/>
<polygon points="16.1,297.2 37.1,318.3 37.1,321.4 16.1,342.5 12.9,342.5 -8.1,321.4 -8.1,318.3 12.9,297.2" fill="#f5f4f5"/>
<polygon points="-10.0,323.2 11.1,344.3 11.1,347.4 -10.0,368.5 -13.1,368.5 -34.2,347.4 -34.2,344.3 -13.1,323.2" fill="#f5f4f5"/>
<polygon points="-36.0,349.2 -14.9,370.3 -14.9,373.4 -36.0,394.5 -39.1,394.5 -60.2,373.4 -60.2,370.3 -39.1,349.2" fill="#f5f4f5"/>
<polygon points="380.4,-15.1 401.4,6.0 401.4,9.1 380.4,30.2 377.2,30.2 356.2,9.1 356.2,6.0 377.2,-15.1" fill="#f7f3ec"/>
<polygon points="354.3,11.0 375.4,32.0 375.4,35.1 354.3,56.2 351.2,56.2 330.1,35.1 330.1,32.0 351.2,11.0" fill="#f5f4f5"/>
<polygon points="328.3,37.0 349.4,58.1 349.4,61.2 328.3,82.2 325.2,82.2 304.1,61.2 304.1,58.1 325.2,37.0" fill="#f5f4f5"/>
<polygon points="302.3,63.0 323.4,84.1 323.4,87.2 302.3,108.3 299.2,108.3 278.1,87.2 278.1,84.1 299.2,63.0" fill="#f7f3ec"/>
<polygon points="276.3,89.0 297.3,110.1 297.3,113.2 276.3,134.3 273.2,134.3 252.1,113.2 252.1,110.1 273.2,89.0" fill="#f5f4f5"/>
<polygon points="250.2,115.0 271.3,136.1 271.3,139.2 250.2,160.3 247.1,160.3 226.1,139.2 226.1,136.1 247.1,115.0" fill="#faf3e2"/>
<polygon points="224.2,141.1 245.3,162.1 245.3,165.3 224.2,186.3 221.1,186.3 200.0,165.3 200.0,162.1 221.1,141.1" fill="#f5f4f5"/>
<polygon points="198.2,167.1 219.3,188.2 219.3,191.3 198.2,212.3 195.1,212.3 174.0,191.3 174.0,188.2 195.1,167.1" fill="#f5f4f5"/>
<polygon points="172.2,193.1 193.3,214.2 193.3,217.3 172.2,238.4 169.1,238.4 148.0,217.3 148.0,214.2 169.1,193.1" fill="#f5f4f5"/>
<polygon points="146.2,219.1 167.2,240.2 167.2,243.3 146.2,264.4 143.0,264.4 122.0,243.3 122.0,240.2 143.0,219.1" fill="#f5f4f5"/>
<polygon points="120.1,245.2 141.2,266.2 141.2,269.3 120.1,290.4 117.0,290.4 96.0,269.3 96.0,266.2 117.0,245.2" fill="#faf3e2"/>
<polygon points="94.1,271.2 115.2,292.2 115.2,295.4 94.1,316.4 91.0,316.4 69.9,295.4 69.9,292.2 91.0,271.2" fill="#f7f3ec"/>
<polygon points="68.1,297.2 89.2,318.3 89.2,321.4 68.1,342.5 65.0,342.5 43.9,321.4 43.9,318.3 65.0,297.2" fill="#f5f4f5"/>
<polygon points="42.1,323.2 63.1,344.3 63.1,347.4 42.1,368.5 39.0,368.5 17.9,347.4 17.9,344.3 39.0,323.2" fill="#faf3e2"/>
<polygon points="16.1,349.2 37.1,370.3 37.1,373.4 16.1,394.5 12.9,394.5 -8.1,373.4 -8.1,370.3 12.9,349.2" fill="#f7f3ec"/>
<polygon points="-10.0,375.3 11.1,396.3 11.1,399.4 -10.0,420.5 -13.1,420.5 -34.2,399.4 -34.2,396.3 -13.1,375.3" fill="#faf3e2"/>
<polygon points="-36.0,401.3 -14.9,422.4 -14.9,425.5 -36.0,446.5 -39.1,446.5 -60.2,425.5 -60.2,422.4 -39.1,401.3" fill="#faf3e2"/>
<polygon points="380.4,37.0 401.4,58.1 401.4,61.2 380.4,82.2 377.2,82.2 356.2,61.2 356.2,58.1 377.2,37.0" fill="#faf3e2"/>
<polygon points="354.3,63.0 375.4,84.1 375.4,87.2 354.3,108.3 351.2,108.3 330.1,87.2 330.1,84.1 351.2,63.0" fill="#f5f4f5"/>
<polygon points="328.3,89.0 349.4,110.1 349.4,113.2 328.3,134.3 325.2,134.3 304.1,113.2 304.1,110.1 325.2,89.0" fill="#faf3e2"/>
<polygon points="302.3,115.0 323.4,136.1 323.4,139.2 302.3,160.3 299.2,160.3 278.1,139.2 278.1,136.1 299.2,115.0" fill="#faf3e2"/>
<polygon points="276.3,141.1 297.3,162.1 297.3,165.3 276.3,186.3 273.2,186.3 252.1,165.3 252.1,162.1 273.2,141.1" fill="#f7f3ec"/>
<polygon points="250.2,167.1 271.3,188.2 271.3,191.3 250.2,212.3 247.1,212.3 226.1,191.3 226.1,188.2 247.1,167.1" fill="#f5f4f5"/>
<polygon points="224.2,193.1 245.3,214.2 245.3,217.3 224.2,238.4 221.1,238.4 200.0,217.3 200.0,214.2 221.1,193.1" fill="#faf3e2"/>
<polygon points="198.2,219.1 219.3,240.2 219.3,243.3 198.2,264.4 195.1,264.4 174.0,243.3 174.0,240.2 195.1,219.1" fill="#f7f3ec"/>
<polygon points="172.2,245.2 193.3,266.2 193.3,269.3 172.2,290.4 169.1,290.4 148.0,269.3 148.0,266.2 169.1,245.2" fill="#f5f4f5"/>
<polygon points="146.2,271.2 167.2,292.2 167.2,295.4 146.2,316.4 143.0,316.4 122.0,295.4 122.0,292.2 143.0,271.2" fill="#f5f4f5"/>
<polygon points="120.1,297.2 141.2,318.3 141.2,321.4 120.1,342.5 117.0,342.5 96.0,321.4 96.0,318.3 117.0,297.2" fill="#f5f4f5"/>
<polygon points="94.1,323.2 115.2,344.3 115.2,347.4 94.1,368.5 91.0,368.5 69.9,347.4 69.9,344.3 91.0,323.2" fill="#f5f4f5"/>
<polygon points="68.1,349.2 89.2,370.3 89.2,373.4 68.1,394.5 65.0,394.5 43.9,373.4 43.9,370.3 65.0,349.2" fill="#faf3e2"/>
<polygon points="42.1,375.3 63.1,396.3 63.1,399.4 42.1,420.5 39.0,420.5 17.9,399.4 17.9,396.3 39.0,375.3" fill="#f7f3ec"/>
<polygon points="16.1,401.3 37.1,422.4 37.1,425.5 16.1,446.5 12.9,446.5 -8.1,425.5 -8.1,422.4 12.9,401.3" fill="#f7f3ec"/>
<polygon points="-10.0,427.3 11.1,448.4 11.1,451.5 -10.0,472.6 -13.1,472.6 -34.2,451.5 -34.2,448.4 -13.1,427.3" fill="#f5f4f5"/>
<polygon points="-36.0,453.3 -14.9,474.4 -14.9,477.5 -36.0,498.6 -39.1,498.6 -60.2,477.5 -60.2,474.4 -39.1,453.3" fill="#f5f4f5"/>
<polygon points="380.4,89.0 401.4,110.1 401.4,113.2 380.4,134.3 377.2,134.3 356.2,113.2 356.2,110.1 377.2,89.0" fill="#faf3e2"/>
<polygon points="354.3,115.0 375.4,136.1 375.4,139.2 354.3,160.3 351.2,160.3 330.1,139.2 330.1,136.1 351.2,115.0" fill="#faf3e2"/>
<polygon points="328.3,141.1 349.4,162.1 349.4,165.3 328.3,186.3 325.2,186.3 304.1,165.3 304.1,162.1 325.2,141.1" fill="#faf3e2"/>
<polygon points="302.3,167.1 323.4,188.2 323.4,191.3 302.3,212.3 299.2,212.3 278.1,191.3 278.1,188.2 299.2,167.1" fill="#faf3e2"/>
<polygon points="276.3,193.1 297.3,214.2 297.3,217.3 276.3,238.4 273.2,238.4 252.1,217.3 252.1,214.2 273.2,193.1" fill="#f7f3ec"/>
<polygon points="250.2,219.1 271.3,240.2 271.3,243.3 250.2,264.4 247.1,264.4 226.1,243.3 226.1,240.2 247.1,219.1" fill="#f5f4f5"/>
<polygon points="224.2,245.2 245.3,266.2 245.3,269.3 224.2,290.4 221.1,290.4 200.0,269.3 200.0,266.2 221.1,245.2" fill="#faf3e2"/>
<polygon points="198.2,271.2 219.3,292.2 219.3,295.4 198.2,316.4 195.1,316.4 174.0,295.4 174.0,292.2 195.1,271.2" fill="#faf3e2"/>
<polygon points="172.2,297.2 193.3,318.3 193.3,321.4 172.2,342.5 169.1,342.5 148.0,321.4 148.0,318.3 169.1,297.2" fill="#f7f3ec"/>
<polygon points="146.2,323.2 167.2,344.3 167.2,347.4 146.2,368.5 143.0,368.5 122.0,347.4 122.0,344.3 143.0,323.2" fill="#f7f3ec"/>
<polygon points="120.1,349.2 141.2,370.3 141.2,373.4 120.1,394.5 117.0,394.5 96.0,373.4 96.0,370.3 117.0,349.2" fill="#f5f4f5"/>
<polygon points="94.1,375.3 115.2,396.3 115.2,399.4 94.1,420.5 91.0,420.5 69.9,399.4 69.9,396.3 91.0,375.3" fill="#f5f4f5"/>
<polygon points="68.1,401.3 89.2,422.4 89.2,425.5 68.1,446.5 65.0,446.5 43.9,425.5 43.9,422.4 65.0,401.3" fill="#f5f4f5"/>
<polygon points="42.1,427.3 63.1,448.4 63.1,451.5 42.1,472.6 39.0,472.6 17.9,451.5 17.9,448.4 39.0,427.3" fill="#f5f4f5"/>
<polygon points="16.1,453.3 37.1,474.4 37.1,477.5 16.1,498.6 12.9,498.6 -8.1,477.5 -8.1,474.4 12.9,453.3" fill="#f5f4f5"/>
<polygon points="380.4,141.1 401.4,162.1 401.4,165.3 380.4,186.3 377.2,186.3 356.2,165.3 356.2,162.1 377.2,141.1" fill="#f5f4f5"/>
<polygon points="354.3,167.1 375.4,188.2 375.4,191.3 354.3,212.3 351.2,212.3 330.1,191.3 330.1,188.2 351.2,167.1" fill="#faf3e2"/>
<polygon points="328.3,193.1 349.4,214.2 349.4,217.3 328.3,238.4 325.2,238.4 304.1,217.3 304.1,214.2 325.2,193.1" fill="#f5f4f5"/>
<polygon points="302.3,219.1 323.4,240.2 323.4,243.3 302.3,264.4 299.2,264.4 278.1,243.3 278.1,240.2 299.2,219.1" fill="#f5f4f5"/>
<polygon points="276.3,245.2 297.3,266.2 297.3,269.3 276.3,290.4 273.2,290.4 252.1,269.3 252.1,266.2 273.2,245.2" fill="#f5f4f5"/>
<polygon points="250.2,271.2 271.3,292.2 271.3,295.4 250.2,316.4 247.1,316.4 226.1,295.4 226.1,292.2 247.1,271.2" fill="#f5f4f5"/>
<polygon points="224.2,297.2 245.3,318.3 245.3,321.4 224.2,342.5 221.1,342.5 200.0,321.4 200.0,318.3 221.1,297.2" fill="#f7f3ec"/>
<polygon points="198.2,323.2 219.3,344.3 219.3,347.4 198.2,368.5 195.1,368.5 174.0,347.4 174.0,344.3 195.1,323.2" fill="#f7f3ec"/>
<polygon points="172.2,349.2 193.3,370.3 193.3,373.4 172.2,394.5 169.1,394.5 148.0,373.4 148.0,370.3 169.1,349.2" fill="#faf3e2"/>
<polygon points="146.2,375.3 167.2,396.3 167.2,399.4 146.2,420.5 143.0,420.5 122.0,399.4 122.0,396.3 143.0,375.3" fill="#f5f4f5"/>
<polygon points="120.1,401.3 141.2,422.4 141.2,425.5 120.1,446.5 117.0,446.5 96.0,425.5 96.0,422.4 117.0,401.3" fill="#faf3e2"/>
<polygon points="94.1,427.3 115.2,448.4 115.2,451.5 94.1,472.6 91.0,472.6 69.9,451.5 69.9,448.4 91.0,427.3" fill="#faf3e2"/>
<polygon points="68.1,453.3 89.2,474.4 89.2,477.5 68.1,498.6 65.0,498.6 43.9,477.5 43.9,474.4 65.0,453.3" fill="#faf3e2"/>
<polygon points="380.4,193.1 401.4,214.2 401.4,217.3 380.4,238.4 377.2,238.4 356.2,217.3 356.2,214.2 377.2,193.1" fill="#faf3e2"/>
<polygon points="354.3,219.1 375.4,240.2 375.4,243.3 354.3,264.4 351.2,264.4 330.1,243.3 330.1,240.2 351.2,219.1" fill="#f7f3ec"/>
<polygon points="328.3,245.2 349.4,266.2 349.4,269.3 328.3,290.4 325.2,290.4 304.1,269.3 304.1,266.2 325.2,245.2" fill="#faf3e2"/>
<polygon points="302.3,271.2 323.4,292.2 323.4,295.4 302.3,316.4 299.2,316.4 278.1,295.4 278.1,292.2 299.2,271.2" fill="#faf3e2"/>
<polygon points="276.3,297.2 297.3,318.3 297.3,321.4 276.3,342.5 273.2,342.5 252.1,321.4 252.1,318.3 273.2,297.2" fill="#faf3e2"/>
<polygon points="250.2,323.2 271.3,344.3 271.3,347.4 250.2,368.5 247.1,368.5 226.1,347.4 226.1,344.3 247.1,323.2" fill="#faf3e2"/>
<polygon points="224.2,349.2 245.3,370.3 245.3,373.4 224.2,394.5 221.1,394.5 200.0,373.4 200.0,370.3 221.1,349.2" fill="#f7f3ec"/>
<polygon points="198.2,375.3 219.3,396.3 219.3,399.4 198.2,420.5 195.1,420.5 174.0,399.4 174.0,396.3 195.1,375.3" fill="#faf3e2"/>
<polygon points="172.2,401.3 193.3,422.4 193.3,425.5 172.2,446.5 169.1,446.5 148.0,425.5 148.0,422.4 169.1,401.3" fill="#f5f4f5"/>
<polygon points="146.2,427.3 167.2,448.4 167.2,451.5 146.2,472.6 143.0,472.6 122.0,451.5 122.0,448.4 143.0,427.3" fill="#f5f4f5"/>
<polygon points="120.1,453.3 141.2,474.4 141.2,477.5 120.1,498.6 117.0,498.6 96.0,477.5 96.0,474.4 117.0,453.3" fill="#faf3e2"/>
<polygon points="380.4,245.2 401.4,266.2 401.4,269.3 380.4,290.4 377.2,290.4 356.2,269.3 356.2,266.2 377.2,245.2" fill="#faf3e2"/>
<polygon points="354.3,271.2 375.4,292.2 375.4,295.4 354.3,316.4 351.2,316.4 330.1,295.4 330.1,292.2 351.2,271.2" fill="#f7f3ec"/>
<polygon points="328.3,297.2 349.4,318.3 349.4,321.4 328.3,342.5 325.2,342.5 304.1,321.4 304.1,318.3 325.2,297.2" fill="#f7f3ec"/>
<polygon points="302.3,323.2 323.4,344.3 323.4,347.4 302.3,368.5 299.2,368.5 278.1,347.4 278.1,344.3 299.2,323.2" fill="#faf3e2"/>
<polygon points="276.3,349.2 297.3,370.3 297.3,373.4 276.3,394.5 273.2,394.5 252.1,373.4 252.1,370.3 273.2,349.2" fill="#f5f4f5"/>
<polygon points="250.2,375.3 271.3,396.3 271.3,399.4 250.2,420.5 247.1,420.5 226.1,399.4 226.1,396.3 247.1,375.3" fill="#f5f4f5"/>
<polygon points="224.2,401.3 245.3,422.4 245.3,425.5 224.2,446.5 221.1,446.5 200.0,425.5 200.0,422.4 221.1,401.3" fill="#f7f3ec"/>
<polygon points="198.2,427.3 219.3,448.4 219.3,451.5 198.2,472.6 195.1,472.6 174.0,451.5 174.0,448.4 195.1,427.3" fill="#f7f3ec"/>
<polygon points="172.2,453.3 193.3,474.4 193.3,477.5 172.2,498.6 169.1,498.6 148.0,477.5 148.0,474.4 169.1,453.3" fill="#faf3e2"/>
<polygon points="380.4,297.2 401.4,318.3 401.4,321.4 380.4,342.5 377.2,342.5 356.2,321.4 356.2,318.3 377.2,297.2" fill="#faf3e2"/>
<polygon points="354.3,323.2 375.4,344.3 375.4,347.4 354.3,368.5 351.2,368.5 330.1,347.4 330.1,344.3 351.2,323.2" fill="#f7f3ec"/>
<polygon points="328.3,349.2 349.4,370.3 349.4,373.4 328.3,394.5 325.2,394.5 304.1,373.4 304.1,370.3 325.2,349.2" fill="#faf3e2"/>
<polygon points="302.3,375.3 323.4,396.3 323.4,399.4 302.3,420.5 299.2,420.5 278.1,399.4 278.1,396.3 299.2,375.3" fill="#f5f4f5"/>
<polygon points="276.3,401.3 297.3,422.4 297.3,425.5 276.3,446.5 273.2,446.5 252.1,425.5 252.1,422.4 273.2,401.3" fill="#faf3e2"/>
<polygon points="250.2,427.3 271.3,448.4 271.3,451.5 250.2,472.6 247.1,472.6 226.1,451.5 226.1,448.4 247.1,427.3" fill="#faf3e2"/>
<polygon points="224.2,453.3 245.3,474.4 245.3,477.5 224.2,498.6 221.1,498.6 200.0,477.5 200.0,474.4 221.1,453.3" fill="#f5f4f5"/>
<polygon points="380.4,349.2 401.4,370.3 401.4,373.4 380.4,394.5 377.2,394.5 356.2,373.4 356.2,370.3 377.2,349.2" fill="#f5f4f5"/>
<polygon points="354.3,375.3 375.4,396.3 375.4,399.4 354.3,420.5 351.2,420.5 330.1,399.4 330.1,396.3 351.2,375.3" fill="#faf3e2"/>
<polygon points="328.3,401.3 349.4,422.4 349.4,425.5 328.3,446.5 325.2,446.5 304.1,425.5 304.1,422.4 325.2,401.3" fill="#f5f4f5"/>
<polygon points="302.3,427.3 323.4,448.4 323.4,451.5 302.3,472.6 299.2,472.6 278.1,451.5 278.1,448.4 299.2,427.3" fill="#faf3e2"/>
<polygon points="276.3,453.3 297.3,474.4 297.3,477.5 276.3,498.6 273.2,498.6 252.1,477.5 252.1,474.4 273.2,453.3" fill="#f5f4f5"/>
<polygon points="380.4,401.3 401.4,422.4 401.4,425.5 380.4,446.5 377.2,446.5 356.2,425.5 356.2,422.4 377.2,401.3" fill="#f5f4f5"/>
<polygon points="354.3,427.3 375.4,448.4 375.4,451.5 354.3,472.6 351.2,472.6 330.1,451.5 330.1,448.4 351.2,427.3" fill="#f5f4f5"/>
<polygon points="328.3,453.3 349.4,474.4 349.4,477.5 328.3,498.6 325.2,498.6 304.1,477.5 304.1,474.4 325.2,453.3" fill="#f5f4f5"/>
<polygon points="380.4,453.3 401.4,474.4 401.4,477.5 380.4,498.6 377.2,498.6 356.2,477.5 356.2,474.4 377.2,453.3" fill="#faf3e2"/>
</g>
<clipPath id="old"><polygon points="332.0,0.0 640.0,0.0 665.0,86.0 730.0,126.0 680.0,196.0 650.0,236.0 580.0,326.0 540.0,436.0 540.0,450.0 312.0,450.0 312.0,433.0 240.0,366.0 169.0,306.0 190.0,196.0 220.0,100.0 280.0,48.0"/></clipPath>
<g clip-path="url(#old)">
<rect x="393.2" y="67.4" width="22.4" height="15.5" transform="rotate(22 404.4 75.2)" fill="#faf2df"/>
<rect x="315.3" y="355.2" width="25.8" height="19.9" transform="rotate(24 328.2 365.2)" fill="#f6f5f4"/>
<rect x="593.0" y="95.5" width="18.3" height="13.0" transform="rotate(-38 602.1 102.0)" fill="#faf2df"/>
<rect x="347.6" y="105.9" width="21.1" height="21.4" transform="rotate(-4 358.1 116.6)" fill="#f6f5f4"/>
<rect x="396.4" y="93.8" width="13.6" height="10.8" transform="rotate(-24 403.3 99.2)" fill="#f6f5f4"/>
<rect x="678.3" y="369.6" width="17.7" height="17.1" transform="rotate(24 687.2 378.2)" fill="#faf2df"/>
<rect x="548.9" y="400.1" width="22.5" height="18.5" transform="rotate(-2 560.1 409.4)" fill="#faf2df"/>
<rect x="616.8" y="138.8" width="22.8" height="21.6" transform="rotate(-8 628.2 149.6)" fill="#faf2df"/>
<rect x="705.4" y="321.3" width="12.7" height="9.8" transform="rotate(-28 711.8 326.2)" fill="#f6f5f4"/>
<rect x="625.8" y="54.9" width="23.2" height="21.7" transform="rotate(13 637.4 65.8)" fill="#faf2df"/>
<rect x="495.7" y="48.1" width="10.2" height="21.6" transform="rotate(12 500.8 58.9)" fill="#faf2df"/>
<rect x="692.8" y="185.4" width="23.9" height="19.6" transform="rotate(-23 704.8 195.2)" fill="#faf2df"/>
<rect x="355.6" y="102.4" width="19.4" height="11.6" transform="rotate(-6 365.3 108.2)" fill="#faf2df"/>
<rect x="683.6" y="151.1" width="17.3" height="16.2" transform="rotate(32 692.3 159.2)" fill="#faf2df"/>
<rect x="687.1" y="218.1" width="18.5" height="15.3" transform="rotate(-39 696.4 225.7)" fill="#faf2df"/>
<rect x="295.7" y="-3.4" width="22.8" height="10.4" transform="rotate(-2 307.0 1.8)" fill="#f6f5f4"/>
<rect x="495.8" y="138.8" width="18.3" height="15.8" transform="rotate(23 504.9 146.7)" fill="#faf2df"/>
<rect x="499.7" y="102.4" width="14.4" height="18.8" transform="rotate(1 507.0 111.8)" fill="#faf2df"/>
<rect x="604.3" y="402.3" width="17.1" height="16.6" transform="rotate(0 612.8 410.6)" fill="#faf2df"/>
<rect x="567.9" y="196.2" width="18.5" height="14.7" transform="rotate(35 577.1 203.6)" fill="#f6f5f4"/>
<rect x="667.5" y="416.1" width="14.2" height="15.8" transform="rotate(35 674.6 424.0)" fill="#f6f5f4"/>
<rect x="274.1" y="50.2" width="17.1" height="9.0" transform="rotate(-21 282.7 54.7)" fill="#faf2df"/>
<rect x="552.6" y="347.7" width="24.4" height="10.2" transform="rotate(17 564.8 352.8)" fill="#f6f5f4"/>
<rect x="273.0" y="391.7" width="25.5" height="11.1" transform="rotate(36 285.8 397.3)" fill="#faf2df"/>
<rect x="456.6" y="440.3" width="23.3" height="10.3" transform="rotate(-5 468.2 445.4)" fill="#faf2df"/>
<rect x="382.2" y="79.0" width="15.1" height="18.1" transform="rotate(-38 389.7 88.1)" fill="#faf2df"/>
<rect x="435.8" y="-0.2" width="15.3" height="16.7" transform="rotate(1 443.4 8.1)" fill="#faf2df"/>
<rect x="339.5" y="11.9" width="22.5" height="11.8" transform="rotate(-30 350.7 17.8)" fill="#faf2df"/>
<rect x="686.0" y="363.5" width="14.1" height="10.1" transform="rotate(34 693.0 368.5)" fill="#faf2df"/>
<rect x="575.8" y="31.4" width="10.9" height="17.6" transform="rotate(-6 581.2 40.3)" fill="#faf2df"/>
<rect x="695.9" y="280.9" width="22.8" height="9.2" transform="rotate(28 707.3 285.5)" fill="#faf2df"/>
<rect x="659.6" y="196.3" width="15.4" height="15.7" transform="rotate(34 667.3 204.2)" fill="#faf2df"/>
<rect x="271.6" y="232.3" width="13.8" height="9.5" transform="rotate(-27 278.5 237.1)" fill="#faf2df"/>
<rect x="309.5" y="131.1" width="14.9" height="18.6" transform="rotate(-17 316.9 140.4)" fill="#faf2df"/>
<rect x="299.1" y="150.4" width="10.3" height="11.5" transform="rotate(-39 304.3 156.2)" fill="#f6f5f4"/>
<rect x="493.3" y="74.7" width="17.6" height="21.1" transform="rotate(-31 502.1 85.3)" fill="#f6f5f4"/>
<rect x="427.4" y="216.0" width="23.4" height="13.5" transform="rotate(1 439.1 222.8)" fill="#f6f5f4"/>
<rect x="719.0" y="145.3" width="23.3" height="17.9" transform="rotate(11 730.7 154.2)" fill="#faf2df"/>
<rect x="388.2" y="20.0" width="12.1" height="9.0" transform="rotate(19 394.2 24.5)" fill="#faf2df"/>
<rect x="284.8" y="27.9" width="23.5" height="20.2" transform="rotate(14 296.5 38.0)" fill="#faf2df"/>
<rect x="329.7" y="126.8" width="17.4" height="10.2" transform="rotate(-4 338.4 131.9)" fill="#faf2df"/>
<rect x="710.4" y="432.0" width="18.8" height="11.4" transform="rotate(37 719.7 437.7)" fill="#faf2df"/>
<rect x="390.9" y="-6.8" width="16.1" height="14.6" transform="rotate(0 399.0 0.5)" fill="#faf2df"/>
<rect x="470.4" y="-2.4" width="14.2" height="9.3" transform="rotate(-8 477.5 2.2)" fill="#faf2df"/>
<rect x="215.1" y="128.8" width="13.7" height="16.2" transform="rotate(2 221.9 136.9)" fill="#f6f5f4"/>
<rect x="546.5" y="315.5" width="24.1" height="13.5" transform="rotate(-14 558.5 322.2)" fill="#f6f5f4"/>
<rect x="279.1" y="321.6" width="20.3" height="8.6" transform="rotate(27 289.2 325.9)" fill="#f6f5f4"/>
<rect x="531.0" y="325.3" width="23.0" height="10.0" transform="rotate(2 542.5 330.2)" fill="#faf2df"/>
<rect x="640.9" y="354.0" width="23.2" height="16.2" transform="rotate(31 652.5 362.1)" fill="#f6f5f4"/>
<rect x="572.2" y="98.5" width="10.5" height="9.9" transform="rotate(-11 577.5 103.5)" fill="#faf2df"/>
<rect x="643.0" y="243.0" width="20.0" height="16.8" transform="rotate(14 653.0 251.3)" fill="#faf2df"/>
<rect x="200.8" y="351.4" width="22.0" height="15.0" transform="rotate(3 211.8 359.0)" fill="#f6f5f4"/>
<rect x="238.0" y="327.0" width="14.0" height="9.0" transform="rotate(-19 245.0 331.6)" fill="#f6f5f4"/>
<rect x="306.0" y="325.5" width="25.6" height="14.9" transform="rotate(-9 318.8 332.9)" fill="#faf2df"/>
<rect x="562.4" y="336.6" width="19.9" height="17.0" transform="rotate(-34 572.4 345.1)" fill="#faf2df"/>
<rect x="337.2" y="326.5" width="14.9" height="15.9" transform="rotate(-39 344.6 334.4)" fill="#faf2df"/>
<rect x="341.9" y="293.7" width="21.1" height="17.5" transform="rotate(-17 352.4 302.4)" fill="#faf2df"/>
<rect x="450.3" y="199.6" width="11.9" height="20.5" transform="rotate(-24 456.3 209.9)" fill="#f6f5f4"/>
<rect x="440.5" y="361.8" width="25.5" height="14.3" transform="rotate(-19 453.3 369.0)" fill="#faf2df"/>
<rect x="509.0" y="53.1" width="18.4" height="21.3" transform="rotate(-29 518.2 63.8)" fill="#f6f5f4"/>
<rect x="469.0" y="393.5" width="21.3" height="11.2" transform="rotate(32 479.6 399.1)" fill="#faf2df"/>
<rect x="214.2" y="-5.5" width="17.9" height="14.3" transform="rotate(-16 223.2 1.6)" fill="#faf2df"/>
<rect x="380.6" y="138.2" width="23.4" height="8.0" transform="rotate(20 392.3 142.2)" fill="#f6f5f4"/>
<rect x="262.9" y="406.6" width="21.4" height="20.6" transform="rotate(-17 273.6 416.9)" fill="#faf2df"/>
<rect x="408.5" y="442.9" width="19.4" height="13.0" transform="rotate(-6 418.2 449.5)" fill="#faf2df"/>
<rect x="223.9" y="39.8" width="23.4" height="12.0" transform="rotate(35 235.6 45.8)" fill="#faf2df"/>
<rect x="344.3" y="223.3" width="13.0" height="13.2" transform="rotate(36 350.8 229.9)" fill="#f6f5f4"/>
<rect x="628.0" y="273.3" width="24.6" height="21.2" transform="rotate(4 640.3 283.9)" fill="#f6f5f4"/>
<rect x="227.6" y="320.3" width="17.2" height="18.5" transform="rotate(12 236.2 329.6)" fill="#faf2df"/>
<rect x="229.9" y="409.7" width="12.0" height="14.6" transform="rotate(-13 236.0 417.0)" fill="#faf2df"/>
<rect x="594.6" y="430.7" width="14.2" height="17.2" transform="rotate(-16 601.7 439.3)" fill="#faf2df"/>
<rect x="412.7" y="69.8" width="12.6" height="10.9" transform="rotate(32 419.0 75.3)" fill="#faf2df"/>
<rect x="313.6" y="400.7" width="25.9" height="14.3" transform="rotate(-29 326.6 407.8)" fill="#faf2df"/>
<rect x="252.3" y="148.2" width="11.5" height="11.3" transform="rotate(-19 258.1 153.9)" fill="#faf2df"/>
<rect x="671.9" y="330.4" width="16.6" height="13.8" transform="rotate(2 680.2 337.3)" fill="#faf2df"/>
<rect x="382.0" y="17.2" width="14.4" height="21.5" transform="rotate(-30 389.2 27.9)" fill="#faf2df"/>
<rect x="537.0" y="382.4" width="13.5" height="11.8" transform="rotate(-20 543.7 388.3)" fill="#faf2df"/>
<rect x="434.5" y="419.2" width="23.6" height="20.2" transform="rotate(-38 446.3 429.3)" fill="#faf2df"/>
<rect x="577.3" y="395.0" width="17.6" height="16.2" transform="rotate(-40 586.0 403.1)" fill="#faf2df"/>
<rect x="689.4" y="360.7" width="23.7" height="21.6" transform="rotate(-20 701.2 371.5)" fill="#faf2df"/>
<rect x="281.4" y="224.5" width="20.9" height="21.2" transform="rotate(18 291.8 235.1)" fill="#f6f5f4"/>
<rect x="605.9" y="201.5" width="18.8" height="8.6" transform="rotate(23 615.3 205.8)" fill="#faf2df"/>
<rect x="690.1" y="285.6" width="14.9" height="9.8" transform="rotate(-20 697.6 290.5)" fill="#f6f5f4"/>
<rect x="574.7" y="42.8" width="11.1" height="15.3" transform="rotate(7 580.2 50.5)" fill="#faf2df"/>
<rect x="323.4" y="264.4" width="10.2" height="12.2" transform="rotate(-3 328.5 270.5)" fill="#f6f5f4"/>
<rect x="542.8" y="392.1" width="17.6" height="11.3" transform="rotate(-20 551.6 397.7)" fill="#f6f5f4"/>
<rect x="578.3" y="130.8" width="10.3" height="15.0" transform="rotate(14 583.5 138.3)" fill="#faf2df"/>
<rect x="333.9" y="294.7" width="24.8" height="11.2" transform="rotate(-37 346.3 300.3)" fill="#faf2df"/>
<rect x="426.3" y="297.6" width="13.2" height="19.2" transform="rotate(19 432.9 307.2)" fill="#faf2df"/>
<rect x="311.3" y="426.7" width="15.0" height="19.5" transform="rotate(-22 318.8 436.4)" fill="#faf2df"/>
<rect x="600.4" y="125.2" width="25.2" height="14.9" transform="rotate(-25 613.0 132.7)" fill="#faf2df"/>
<rect x="418.4" y="294.4" width="25.2" height="10.0" transform="rotate(-9 431.0 299.4)" fill="#faf2df"/>
<rect x="229.3" y="16.8" width="16.3" height="20.6" transform="rotate(31 237.5 27.1)" fill="#f6f5f4"/>
<rect x="372.0" y="74.3" width="25.0" height="18.4" transform="rotate(-37 384.5 83.5)" fill="#f6f5f4"/>
<rect x="403.0" y="163.1" width="15.3" height="10.4" transform="rotate(-40 410.7 168.2)" fill="#faf2df"/>
<rect x="390.3" y="419.2" width="12.0" height="21.5" transform="rotate(-23 396.3 430.0)" fill="#faf2df"/>
<rect x="637.0" y="365.6" width="16.9" height="8.7" transform="rotate(-2 645.4 369.9)" fill="#faf2df"/>
<rect x="397.8" y="396.8" width="10.5" height="13.8" transform="rotate(25 403.1 403.6)" fill="#f6f5f4"/>
<rect x="226.0" y="5.2" width="11.0" height="20.9" transform="rotate(-19 231.5 15.7)" fill="#f6f5f4"/>
<rect x="679.1" y="141.9" width="14.4" height="21.4" transform="rotate(9 686.2 152.6)" fill="#faf2df"/>
<rect x="582.6" y="138.4" width="14.4" height="8.1" transform="rotate(20 589.8 142.4)" fill="#f6f5f4"/>
<rect x="540.8" y="418.8" width="10.4" height="11.3" transform="rotate(-2 546.0 424.5)" fill="#f6f5f4"/>
<rect x="708.6" y="166.9" width="14.0" height="14.0" transform="rotate(-1 715.6 173.9)" fill="#f6f5f4"/>
<rect x="296.0" y="351.4" width="21.8" height="19.5" transform="rotate(22 307.0 361.2)" fill="#f6f5f4"/>
<rect x="375.8" y="134.3" width="15.8" height="19.0" transform="rotate(-34 383.7 143.8)" fill="#faf2df"/>
<rect x="603.5" y="107.1" width="11.0" height="8.5" transform="rotate(4 609.0 111.3)" fill="#faf2df"/>
<rect x="245.6" y="34.4" width="18.0" height="17.9" transform="rotate(-4 254.6 43.4)" fill="#faf2df"/>
<rect x="420.5" y="269.9" width="20.8" height="18.5" transform="rotate(28 430.9 279.1)" fill="#f6f5f4"/>
<rect x="266.9" y="370.4" width="14.7" height="15.9" transform="rotate(-10 274.2 378.4)" fill="#f6f5f4"/>
<rect x="308.6" y="106.3" width="13.9" height="10.1" transform="rotate(31 315.6 111.3)" fill="#faf2df"/>
<rect x="370.0" y="170.7" width="25.9" height="15.1" transform="rotate(-21 383.0 178.2)" fill="#f6f5f4"/>
<rect x="550.4" y="438.6" width="11.6" height="14.6" transform="rotate(26 556.3 445.9)" fill="#f6f5f4"/>
<rect x="359.1" y="42.8" width="13.0" height="21.6" transform="rotate(7 365.6 53.6)" fill="#f6f5f4"/>
<rect x="398.7" y="383.9" width="17.2" height="11.6" transform="rotate(22 407.3 389.8)" fill="#f6f5f4"/>
<rect x="256.1" y="262.7" width="19.9" height="11.0" transform="rotate(-11 266.1 268.3)" fill="#faf2df"/>
<rect x="308.3" y="106.1" width="19.6" height="17.1" transform="rotate(-24 318.1 114.7)" fill="#faf2df"/>
<rect x="377.0" y="299.1" width="13.0" height="12.4" transform="rotate(-24 383.4 305.2)" fill="#f6f5f4"/>
<rect x="494.7" y="21.7" width="11.6" height="13.5" transform="rotate(4 500.5 28.5)" fill="#f6f5f4"/>
<rect x="247.7" y="66.8" width="21.1" height="13.7" transform="rotate(-17 258.3 73.7)" fill="#faf2df"/>
<rect x="501.9" y="150.7" width="16.7" height="20.1" transform="rotate(40 510.3 160.7)" fill="#faf2df"/>
<rect x="307.9" y="323.6" width="13.3" height="8.1" transform="rotate(32 314.5 327.6)" fill="#faf2df"/>
<rect x="632.7" y="175.6" width="24.1" height="14.5" transform="rotate(-27 644.8 182.8)" fill="#faf2df"/>
<rect x="490.0" y="283.7" width="24.6" height="9.2" transform="rotate(10 502.3 288.3)" fill="#faf2df"/>
<rect x="470.1" y="58.0" width="14.5" height="15.3" transform="rotate(34 477.4 65.6)" fill="#faf2df"/>
<rect x="457.2" y="356.8" width="25.5" height="10.8" transform="rotate(-30 470.0 362.2)" fill="#f6f5f4"/>
<rect x="230.2" y="406.4" width="16.2" height="20.7" transform="rotate(10 238.3 416.8)" fill="#f6f5f4"/>
<rect x="288.2" y="346.8" width="13.6" height="13.7" transform="rotate(28 294.9 353.6)" fill="#f6f5f4"/>
<rect x="298.8" y="90.5" width="16.4" height="15.3" transform="rotate(-9 307.0 98.2)" fill="#faf2df"/>
<rect x="328.8" y="321.9" width="24.4" height="8.6" transform="rotate(5 340.9 326.2)" fill="#f6f5f4"/>
<rect x="224.3" y="369.0" width="11.9" height="16.4" transform="rotate(4 230.2 377.2)" fill="#f6f5f4"/>
<rect x="362.6" y="182.1" width="19.3" height="14.0" transform="rotate(13 372.3 189.0)" fill="#faf2df"/>
<rect x="432.4" y="3.1" width="19.9" height="14.9" transform="rotate(-21 442.3 10.5)" fill="#f6f5f4"/>
<rect x="617.0" y="198.9" width="12.9" height="14.6" transform="rotate(-31 623.4 206.2)" fill="#faf2df"/>
<rect x="429.7" y="33.7" width="17.1" height="15.1" transform="rotate(-37 438.2 41.3)" fill="#f6f5f4"/>
<rect x="242.4" y="322.5" width="22.4" height="15.2" transform="rotate(-36 253.6 330.1)" fill="#faf2df"/>
<rect x="404.2" y="417.9" width="12.2" height="20.0" transform="rotate(40 410.3 427.9)" fill="#f6f5f4"/>
<rect x="629.1" y="79.7" width="25.7" height="14.9" transform="rotate(37 641.9 87.2)" fill="#f6f5f4"/>
<rect x="285.1" y="350.3" width="24.9" height="8.9" transform="rotate(-12 297.5 354.8)" fill="#f6f5f4"/>
<rect x="286.9" y="393.7" width="14.4" height="19.4" transform="rotate(-29 294.1 403.4)" fill="#faf2df"/>
<rect x="341.8" y="223.4" width="15.1" height="8.5" transform="rotate(-25 349.3 227.7)" fill="#faf2df"/>
<rect x="694.1" y="300.7" width="24.3" height="10.4" transform="rotate(23 706.3 305.9)" fill="#faf2df"/>
<rect x="483.4" y="276.2" width="15.8" height="20.2" transform="rotate(4 491.3 286.3)" fill="#faf2df"/>
<rect x="664.8" y="38.7" width="25.9" height="16.8" transform="rotate(-8 677.7 47.1)" fill="#f6f5f4"/>
<rect x="340.7" y="439.2" width="19.2" height="13.0" transform="rotate(21 350.3 445.7)" fill="#faf2df"/>
<rect x="298.3" y="324.9" width="10.8" height="19.5" transform="rotate(-20 303.7 334.6)" fill="#f6f5f4"/>
<rect x="556.7" y="136.5" width="10.0" height="8.5" transform="rotate(-28 561.8 140.7)" fill="#f6f5f4"/>
<rect x="426.9" y="225.8" width="24.3" height="9.8" transform="rotate(-22 439.1 230.7)" fill="#f6f5f4"/>
<rect x="214.0" y="-3.6" width="15.7" height="9.5" transform="rotate(-11 221.8 1.2)" fill="#faf2df"/>
<rect x="512.7" y="256.7" width="13.3" height="16.7" transform="rotate(-2 519.3 265.1)" fill="#faf2df"/>
<rect x="279.0" y="33.0" width="20.2" height="20.2" transform="rotate(23 289.1 43.1)" fill="#faf2df"/>
<rect x="339.9" y="-2.8" width="20.3" height="15.9" transform="rotate(-12 350.0 5.2)" fill="#f6f5f4"/>
<rect x="434.3" y="416.0" width="21.7" height="11.5" transform="rotate(32 445.2 421.7)" fill="#faf2df"/>
<rect x="484.8" y="178.3" width="13.8" height="8.8" transform="rotate(22 491.7 182.7)" fill="#faf2df"/>
<rect x="495.9" y="418.0" width="12.3" height="10.8" transform="rotate(9 502.0 423.4)" fill="#faf2df"/>
<rect x="543.6" y="359.9" width="12.8" height="12.3" transform="rotate(-16 550.0 366.0)" fill="#faf2df"/>
<rect x="670.6" y="348.3" width="21.4" height="8.1" transform="rotate(28 681.4 352.3)" fill="#f6f5f4"/>
<rect x="448.0" y="328.2" width="17.2" height="11.2" transform="rotate(-32 456.6 333.8)" fill="#faf2df"/>
<rect x="219.6" y="142.1" width="22.0" height="17.7" transform="rotate(28 230.6 151.0)" fill="#f6f5f4"/>
<rect x="342.5" y="239.7" width="17.0" height="19.0" transform="rotate(2 351.0 249.2)" fill="#faf2df"/>
<rect x="543.5" y="424.2" width="13.5" height="20.3" transform="rotate(-39 550.3 434.3)" fill="#faf2df"/>
<rect x="322.6" y="325.5" width="25.1" height="18.4" transform="rotate(-14 335.1 334.7)" fill="#f6f5f4"/>
<rect x="371.9" y="99.2" width="24.5" height="16.8" transform="rotate(15 384.1 107.6)" fill="#f6f5f4"/>
<rect x="717.2" y="202.4" width="23.4" height="17.8" transform="rotate(29 728.9 211.3)" fill="#faf2df"/>
<rect x="586.6" y="251.2" width="14.9" height="11.0" transform="rotate(10 594.1 256.7)" fill="#faf2df"/>
<rect x="211.8" y="41.6" width="24.9" height="12.8" transform="rotate(-29 224.3 48.0)" fill="#faf2df"/>
<rect x="222.0" y="302.8" width="20.1" height="17.8" transform="rotate(19 232.1 311.7)" fill="#faf2df"/>
<rect x="511.4" y="153.8" width="23.1" height="19.5" transform="rotate(31 523.0 163.5)" fill="#faf2df"/>
<rect x="657.4" y="406.7" width="25.1" height="9.5" transform="rotate(-24 669.9 411.5)" fill="#faf2df"/>
<rect x="216.8" y="373.0" width="23.0" height="16.9" transform="rotate(26 228.2 381.5)" fill="#f6f5f4"/>
<rect x="356.5" y="35.6" width="11.6" height="18.6" transform="rotate(-24 362.3 44.9)" fill="#faf2df"/>
<rect x="427.5" y="3.4" width="14.1" height="12.0" transform="rotate(17 434.6 9.4)" fill="#faf2df"/>
<rect x="371.0" y="423.8" width="18.1" height="19.9" transform="rotate(9 380.0 433.8)" fill="#faf2df"/>
<rect x="417.7" y="190.0" width="22.4" height="12.9" transform="rotate(16 428.8 196.4)" fill="#faf2df"/>
<rect x="319.1" y="378.3" width="11.5" height="19.5" transform="rotate(-26 324.8 388.0)" fill="#faf2df"/>
<rect x="304.3" y="339.0" width="25.6" height="8.1" transform="rotate(-1 317.1 343.0)" fill="#faf2df"/>
<rect x="623.3" y="76.6" width="17.9" height="12.9" transform="rotate(27 632.3 83.0)" fill="#faf2df"/>
<rect x="314.8" y="310.0" width="18.0" height="9.5" transform="rotate(11 323.8 314.8)" fill="#faf2df"/>
<rect x="616.3" y="305.3" width="22.6" height="16.8" transform="rotate(-12 627.6 313.7)" fill="#faf2df"/>
<rect x="413.4" y="390.5" width="11.4" height="20.4" transform="rotate(-38 419.1 400.7)" fill="#faf2df"/>
<rect x="340.5" y="398.9" width="18.0" height="13.3" transform="rotate(31 349.5 405.5)" fill="#faf2df"/>
<rect x="443.2" y="229.9" width="22.1" height="18.5" transform="rotate(12 454.3 239.2)" fill="#faf2df"/>
<rect x="371.4" y="61.3" width="23.5" height="17.3" transform="rotate(19 383.1 69.9)" fill="#faf2df"/>
<rect x="432.9" y="343.2" width="19.3" height="9.8" transform="rotate(-3 442.6 348.0)" fill="#f6f5f4"/>
<rect x="328.7" y="77.3" width="14.8" height="17.8" transform="rotate(27 336.1 86.2)" fill="#faf2df"/>
<rect x="285.1" y="103.8" width="15.2" height="15.3" transform="rotate(-27 292.7 111.4)" fill="#faf2df"/>
<rect x="299.5" y="434.1" width="21.7" height="9.4" transform="rotate(37 310.3 438.8)" fill="#faf2df"/>
<rect x="402.3" y="433.6" width="22.7" height="18.3" transform="rotate(-5 413.6 442.7)" fill="#faf2df"/>
<rect x="541.5" y="41.4" width="13.3" height="13.4" transform="rotate(-37 548.1 48.1)" fill="#faf2df"/>
<rect x="620.2" y="303.6" width="18.0" height="16.9" transform="rotate(-3 629.2 312.0)" fill="#faf2df"/>
<rect x="519.0" y="171.8" width="21.9" height="20.7" transform="rotate(-6 530.0 182.1)" fill="#faf2df"/>
<rect x="600.2" y="180.5" width="13.7" height="18.1" transform="rotate(30 607.0 189.5)" fill="#f6f5f4"/>
<rect x="570.6" y="375.1" width="20.9" height="17.0" transform="rotate(-4 581.0 383.6)" fill="#faf2df"/>
<rect x="534.6" y="34.6" width="16.7" height="19.0" transform="rotate(17 543.0 44.0)" fill="#f6f5f4"/>
<rect x="333.9" y="182.3" width="17.3" height="16.7" transform="rotate(-7 342.5 190.6)" fill="#f6f5f4"/>
<rect x="548.8" y="342.8" width="16.2" height="14.9" transform="rotate(38 556.9 350.2)" fill="#faf2df"/>
<rect x="486.7" y="61.8" width="22.5" height="21.2" transform="rotate(2 498.0 72.4)" fill="#faf2df"/>
<rect x="503.8" y="235.9" width="21.5" height="15.2" transform="rotate(11 514.5 243.5)" fill="#f6f5f4"/>
<rect x="473.9" y="179.2" width="25.2" height="10.9" transform="rotate(15 486.5 184.7)" fill="#faf2df"/>
<rect x="601.4" y="48.6" width="25.8" height="13.0" transform="rotate(-35 614.2 55.1)" fill="#faf2df"/>
<rect x="413.5" y="-1.0" width="16.7" height="13.9" transform="rotate(16 421.8 6.0)" fill="#faf2df"/>
<rect x="339.6" y="90.4" width="21.9" height="21.2" transform="rotate(2 350.5 101.0)" fill="#faf2df"/>
<rect x="628.1" y="171.5" width="13.4" height="9.8" transform="rotate(22 634.8 176.4)" fill="#f6f5f4"/>
<rect x="536.7" y="205.5" width="19.0" height="11.2" transform="rotate(37 546.2 211.1)" fill="#faf2df"/>
<rect x="537.0" y="361.2" width="23.1" height="14.6" transform="rotate(-16 548.6 368.4)" fill="#faf2df"/>
<rect x="268.5" y="365.2" width="15.7" height="19.9" transform="rotate(-19 276.3 375.2)" fill="#faf2df"/>
<rect x="337.9" y="187.7" width="13.0" height="8.0" transform="rotate(18 344.4 191.7)" fill="#faf2df"/>
<rect x="331.0" y="128.8" width="17.7" height="14.0" transform="rotate(11 339.8 135.8)" fill="#f6f5f4"/>
<rect x="390.3" y="413.5" width="23.7" height="8.8" transform="rotate(26 402.1 417.9)" fill="#f6f5f4"/>
<rect x="613.9" y="54.7" width="23.3" height="16.9" transform="rotate(-39 625.5 63.2)" fill="#faf2df"/>
<rect x="707.4" y="290.5" width="14.0" height="9.4" transform="rotate(-29 714.4 295.2)" fill="#faf2df"/>
<rect x="615.2" y="145.6" width="12.4" height="20.7" transform="rotate(23 621.4 155.9)" fill="#faf2df"/>
<rect x="671.1" y="265.1" width="22.5" height="17.4" transform="rotate(32 682.3 273.8)" fill="#f6f5f4"/>
<rect x="644.0" y="81.1" width="21.1" height="15.4" transform="rotate(19 654.6 88.8)" fill="#faf2df"/>
<rect x="670.7" y="244.1" width="14.2" height="11.3" transform="rotate(-29 677.8 249.8)" fill="#faf2df"/>
<rect x="234.8" y="202.8" width="12.3" height="14.9" transform="rotate(-0 241.0 210.2)" fill="#faf2df"/>
<rect x="655.6" y="-4.3" width="23.5" height="14.6" transform="rotate(5 667.3 3.0)" fill="#f6f5f4"/>
<rect x="647.1" y="158.0" width="16.7" height="21.4" transform="rotate(-34 655.5 168.7)" fill="#f6f5f4"/>
<rect x="537.3" y="4.1" width="19.8" height="17.6" transform="rotate(35 547.1 12.8)" fill="#faf2df"/>
<rect x="461.6" y="394.9" width="10.5" height="18.1" transform="rotate(10 466.9 403.9)" fill="#faf2df"/>
<rect x="657.9" y="157.1" width="17.6" height="15.4" transform="rotate(22 666.7 164.8)" fill="#faf2df"/>
<rect x="431.2" y="180.3" width="18.9" height="19.6" transform="rotate(-17 440.7 190.1)" fill="#f6f5f4"/>
<rect x="416.8" y="219.1" width="14.3" height="15.1" transform="rotate(38 424.0 226.7)" fill="#f6f5f4"/>
<rect x="622.2" y="142.8" width="15.1" height="12.2" transform="rotate(7 629.7 148.9)" fill="#f6f5f4"/>
<rect x="614.9" y="7.8" width="21.6" height="20.4" transform="rotate(4 625.6 18.0)" fill="#faf2df"/>
<rect x="362.7" y="-7.7" width="13.0" height="20.9" transform="rotate(9 369.2 2.8)" fill="#f6f5f4"/>
<rect x="618.3" y="401.1" width="19.8" height="16.6" transform="rotate(10 628.2 409.4)" fill="#f6f5f4"/>
<rect x="519.3" y="297.8" width="13.4" height="17.3" transform="rotate(-3 526.0 306.4)" fill="#f6f5f4"/>
<rect x="258.4" y="72.2" width="10.6" height="18.8" transform="rotate(33 263.7 81.6)" fill="#f6f5f4"/>
<rect x="394.2" y="362.2" width="22.6" height="15.9" transform="rotate(-19 405.5 370.2)" fill="#faf2df"/>
<rect x="425.1" y="134.8" width="16.9" height="17.0" transform="rotate(35 433.5 143.3)" fill="#faf2df"/>
<rect x="504.8" y="8.0" width="11.9" height="19.3" transform="rotate(6 510.8 17.7)" fill="#f6f5f4"/>
<rect x="438.5" y="-1.8" width="16.2" height="16.3" transform="rotate(35 446.6 6.4)" fill="#f6f5f4"/>
<rect x="456.2" y="177.1" width="11.6" height="17.0" transform="rotate(-23 462.0 185.6)" fill="#faf2df"/>
<rect x="559.7" y="50.1" width="25.5" height="9.2" transform="rotate(30 572.4 54.8)" fill="#faf2df"/>
<rect x="212.5" y="314.6" width="13.9" height="18.3" transform="rotate(-25 219.4 323.7)" fill="#faf2df"/>
<rect x="608.4" y="312.0" width="23.7" height="18.2" transform="rotate(-33 620.2 321.1)" fill="#f6f5f4"/>
<rect x="573.4" y="201.5" width="24.9" height="11.6" transform="rotate(37 585.9 207.3)" fill="#f6f5f4"/>
<rect x="549.2" y="361.6" width="11.3" height="12.4" transform="rotate(18 554.9 367.8)" fill="#faf2df"/>
<path d="M680.8 218.8 L720.9 184.1 M604.8 211.4 L637.6 245.8 M397.1 290.2 L413.3 334.1 M448.1 122.4 L466.7 114.4 M745.2 316.5 L788.7 305.6 M198.8 68.0 L250.1 50.7 M330.3 174.3 L346.4 222.9 M650.3 127.5 L671.4 109.2 M279.6 414.3 L297.1 398.9 M697.6 446.8 L730.5 483.8 M650.0 308.1 L658.1 327.6 M505.6 358.8 L530.2 396.2 M749.9 139.3 L778.7 119.0 M307.8 114.6 L337.0 95.4 M240.0 363.0 L269.2 336.4 M701.2 398.3 L738.6 384.4 M297.8 86.5 L313.5 110.6 M519.4 161.5 L554.3 200.2 M471.2 389.9 L516.0 375.4 M279.0 268.7 L316.1 252.6 M243.6 92.1 L251.9 116.6 M717.5 125.9 L757.4 102.1 M656.7 433.6 L686.3 425.9 M756.9 170.2 L784.2 142.8 M686.3 206.2 L721.5 184.0 M715.6 317.9 L744.6 291.9 M555.2 430.4 L576.1 475.2 M401.4 105.8 L437.6 144.3 M726.5 26.7 L743.1 16.0 M638.2 319.3 L648.9 340.1 M620.3 422.7 L652.9 411.8 M561.9 211.8 L582.6 202.7 M464.3 75.9 L492.6 119.3 M698.5 210.6 L711.6 230.5 M664.7 35.0 L687.2 29.5 M444.9 43.6 L455.3 83.6 M447.8 152.9 L473.4 185.2 M271.4 99.7 L296.7 76.0 M696.9 197.5 L719.0 222.3 M278.7 122.0 L301.1 112.7 M469.9 143.1 L493.8 191.8 M222.4 402.8 L251.9 441.8 M257.9 339.7 L283.8 329.7 M326.0 107.2 L346.3 154.1 M222.8 326.9 L260.3 308.8 M442.0 228.5 L471.7 265.2 M727.9 128.9 L776.2 110.3 M314.4 257.1 L334.5 288.6 M321.3 79.0 L364.2 51.5 M606.6 342.6 L634.2 372.5 M593.4 365.2 L612.0 356.7 M607.6 183.7 L632.1 164.8 M350.6 287.6 L365.4 317.3 M624.9 60.0 L660.4 44.2 M751.9 16.5 L799.0 0.5 M393.0 419.5 L424.9 388.5 M655.4 389.5 L703.7 376.0 M518.5 404.1 L570.2 391.2 M472.0 231.0 L510.5 268.6 M317.5 82.1 L346.6 56.8 M734.6 8.8 L767.2 45.3 M553.0 208.8 L565.4 226.7 M685.6 322.7 L711.9 299.3 M524.0 342.7 L547.7 319.7 M268.1 266.3 L295.1 294.7 M615.5 73.9 L643.3 57.3 M429.7 377.9 L470.3 344.2 M632.8 152.3 L656.8 189.8 M670.5 254.0 L718.2 241.2 M220.5 232.8 L251.2 219.1 M550.6 164.0 L574.6 188.1 M477.7 9.4 L498.4 34.7 M758.6 204.2 L801.1 176.5 M694.2 15.5 L734.2 6.0 M548.1 362.8 L570.1 346.8 M486.6 195.2 L508.6 175.8 M559.1 54.2 L594.7 36.3 M721.2 198.0 L748.6 242.1 M519.1 123.4 L542.8 107.3 M448.9 312.7 L463.7 333.4 M594.9 207.4 L628.5 196.4 M367.0 109.0 L393.0 137.0 M742.7 178.4 L790.8 155.6 M374.7 146.5 L424.7 124.8 M358.4 347.5 L382.9 379.7 M388.4 296.0 L396.2 326.1 M624.8 234.4 L651.9 267.5 M270.0 91.1 L305.9 81.6 M611.1 334.5 L627.7 372.3 M550.3 316.6 L554.7 334.2 M626.4 263.6 L646.6 314.5 M275.3 382.5 L314.6 372.7 M406.4 203.5 L418.7 232.0 M391.2 236.8 L396.7 254.1 M615.1 445.4 L623.9 468.6 M363.3 65.2 L370.1 85.4 M714.5 145.7 L727.5 167.7 M433.1 409.8 L452.3 390.1 M700.7 134.9 L752.5 116.7 M484.9 232.8 L496.5 261.8 M529.0 158.0 L559.6 136.4 M246.4 168.5 L262.3 218.4 M277.9 84.7 L289.8 116.9 M546.0 448.3 L589.7 435.0 M242.6 163.2 L290.0 152.8 M482.2 49.7 L528.4 35.6 M754.4 399.7 L765.9 435.2 M655.2 93.5 L668.1 109.1 M512.0 48.0 L527.1 37.4 M191.6 319.8 L219.5 302.8 M246.1 6.9 L272.8 -17.8 M505.4 119.7 L525.3 146.3 M259.3 70.5 L273.8 55.7 M730.3 220.7 L745.2 266.1 M225.4 5.6 L249.6 -6.0 M347.0 14.8 L391.9 -13.5 M225.9 86.2 L238.1 109.4 M415.7 343.8 L447.6 318.1 M332.1 19.8 L365.7 58.5 M655.1 136.7 L690.5 128.7 M731.3 109.3 L743.1 147.2 M425.7 179.4 L448.9 223.8 M239.9 76.5 L262.7 125.4 M355.7 252.7 L393.8 220.0 M381.5 293.1 L421.6 260.3 M505.7 174.3 L516.4 198.9 M209.9 298.9 L235.9 291.9 M264.0 88.3 L285.3 116.5 M643.1 108.1 L684.5 91.1 M404.8 431.3 L428.3 458.1 M306.5 386.3 L334.8 433.4 M529.7 198.2 L560.8 187.2 M480.8 56.5 L498.3 44.2 M675.6 331.2 L696.2 370.7 M272.7 6.8 L311.0 -20.0 M322.0 84.7 L358.7 48.2 M649.0 341.3 L669.8 362.2 M319.1 56.8 L332.2 87.0 M708.1 348.7 L720.7 369.8 M399.0 359.7 L417.4 355.3 M591.2 208.2 L606.9 246.3 M293.5 51.9 L304.6 67.9 M212.8 72.9 L226.1 92.6 M610.8 248.6 L626.7 269.7 M473.8 234.4 L485.5 271.9 M723.3 50.3 L772.3 38.5 M523.5 313.2 L534.7 329.1 M371.6 349.7 L391.9 343.9 M586.0 177.1 L600.1 193.1 M729.4 190.8 L772.8 177.6 M663.1 282.6 L677.7 323.1 M307.4 302.9 L322.9 322.6 M732.8 371.3 L754.6 361.1 M635.1 106.2 L653.5 98.0 M394.0 185.2 L407.5 203.9 M581.2 218.9 L592.2 243.5 M483.8 200.3 L505.7 193.6 M593.4 264.4 L624.8 300.9 M502.5 342.2 L516.2 361.6 M748.2 377.8 L753.8 399.3 M354.9 162.2 L391.3 198.2 M363.2 49.8 L384.0 41.9 M374.9 210.9 L410.4 195.6 M216.0 210.8 L236.0 250.6 M748.7 253.6 L792.1 222.5 M468.4 352.7 L514.3 328.4 M557.4 282.5 L577.3 276.2 M616.0 11.4 L623.3 39.4 M295.9 287.1 L327.1 319.0 M366.9 277.6 L387.4 321.5 M372.5 165.8 L399.0 158.9 M222.9 48.3 L235.3 99.8 M471.8 224.8 L492.0 259.7 M547.1 63.8 L570.7 88.8 M742.8 40.3 L773.0 21.2 M314.4 167.6 L356.3 140.9 M638.5 191.4 L656.4 182.4 M595.1 400.8 L628.3 374.0 M660.9 406.8 L672.5 420.7 M648.4 303.9 L672.1 333.7 M484.6 192.8 L511.7 239.0 M543.3 365.0 L568.3 347.9 M565.3 254.3 L573.2 289.2 M559.0 134.7 L598.1 120.8 M673.4 100.1 L680.3 122.5 M520.1 249.7 L530.2 274.6 M441.6 117.5 L476.4 154.7 M502.4 50.5 L526.2 43.0 M572.0 319.1 L588.0 340.1 M516.4 50.9 L552.9 27.8 M646.2 60.4 L689.5 29.0 M483.6 207.0 L501.4 257.8 M299.2 213.8 L333.0 181.5 M222.8 106.6 L261.9 86.4 M734.7 206.9 L762.5 187.7 M696.5 279.5 L727.8 321.0 M686.3 75.6 L730.0 63.8 M196.6 115.0 L225.8 149.7 M730.4 324.8 L756.5 307.9 M392.8 147.3 L429.0 110.5 M328.2 159.5 L353.5 207.8 M440.7 356.0 L461.8 398.8 M295.6 249.4 L337.1 239.0 M666.6 264.7 L707.7 250.3 M650.7 426.9 L689.0 387.8 M467.7 217.8 L483.8 207.2 M293.9 368.2 L307.4 420.3 M585.0 201.9 L606.5 236.3 M233.3 148.2 L248.2 165.4 M546.0 95.1 L575.1 86.6 M457.0 421.8 L491.8 403.4 M380.3 9.2 L390.0 48.6 M549.6 327.1 L568.3 348.1 M475.0 117.9 L484.7 134.6 M509.6 346.9 L532.5 381.4 M551.7 163.3 L577.6 156.2 M644.1 63.5 L678.9 33.1 M611.5 229.0 L636.4 258.2 M421.4 27.2 L469.8 12.2 M636.1 226.7 L666.0 272.7 M276.0 92.4 L287.9 122.8 M630.2 418.3 L662.5 387.4 M333.7 257.4 L356.1 246.1 M717.1 263.2 L768.8 245.7 M393.5 348.5 L408.2 398.5 M668.0 143.7 L686.3 164.3 M203.2 74.1 L220.2 66.4 M217.2 201.6 L257.9 191.3 M302.1 330.3 L314.5 347.1 M651.4 394.0 L668.8 388.8 M344.3 289.1 L386.6 258.6 M311.0 147.0 L337.8 127.8 M577.0 152.0 L617.2 126.7 M239.7 275.8 L246.6 307.8 M725.9 393.0 L759.2 372.9 M752.9 25.2 L769.8 17.2 M310.0 238.3 L333.9 218.0 M386.1 306.1 L409.5 338.8 M378.6 333.5 L413.0 324.3 M208.0 291.3 L218.3 320.9 M491.9 123.3 L523.4 106.6 M563.6 348.4 L600.8 330.5 M418.5 440.6 L436.7 427.3 M499.7 92.2 L526.6 122.3 M610.4 406.3 L629.3 430.8 M594.5 198.7 L616.0 245.8 M703.6 175.1 L737.2 214.0 M251.4 330.0 L294.9 301.7 M574.3 157.8 L594.2 184.3 M713.9 425.2 L727.3 438.4 M594.3 108.8 L636.1 89.5 M556.3 134.3 L572.6 169.9 M279.3 388.4 L301.8 383.3 M361.0 39.8 L401.1 8.3 M282.1 307.2 L290.4 325.4 M635.8 383.1 L677.3 361.7 M440.3 195.7 L454.8 220.8 M203.9 50.2 L225.0 30.0 M476.5 158.3 L496.9 183.8 M426.1 289.0 L439.1 341.6 M208.8 105.6 L234.5 79.5 M322.0 193.7 L338.4 182.6 M699.6 29.1 L725.5 4.0 M267.4 192.8 L293.0 220.9 M550.9 245.5 L589.8 215.6 M735.6 34.8 L764.5 80.4 M317.7 32.6 L337.7 52.1 M740.8 88.4 L770.6 63.9 M396.7 4.8 L427.7 -17.4 M502.8 310.6 L530.5 299.7 M428.9 437.8 L442.7 486.5 M648.1 404.1 L675.2 379.6 M753.5 312.1 L763.7 359.6 M568.2 39.1 L585.1 28.7 M585.7 146.0 L595.5 174.0 M743.8 0.4 L757.4 38.0 M757.0 105.5 L764.7 124.3 M746.3 119.9 L788.7 98.4 M568.6 415.8 L613.6 396.0 M678.9 156.5 L696.7 208.5 M227.5 340.8 L262.9 328.2 M653.6 107.4 L682.9 138.2 M291.3 426.3 L315.0 405.8 M682.3 192.6 L694.0 217.3 M248.6 160.5 L268.5 153.0 M415.5 448.6 L443.3 426.3 M645.0 341.5 L661.4 357.3 M468.6 297.1 L513.5 281.1 M334.1 250.3 L350.2 238.2 M291.7 323.2 L318.4 316.9 M341.3 197.1 L347.6 221.8 M431.2 356.5 L474.5 346.3 M404.2 18.8 L437.3 11.5 M536.2 115.6 L561.5 145.8 M717.1 86.2 L739.9 74.6 M680.3 36.0 L694.3 70.7 M473.1 405.6 L500.9 378.5 M723.0 315.4 L735.9 348.5 M697.5 197.9 L717.5 239.2 M195.4 104.6 L207.8 119.6 M577.5 249.2 L583.6 270.8 M315.8 34.7 L331.0 19.8 M619.4 254.0 L640.7 240.2 M381.3 388.3 L387.1 410.8 M422.0 22.5 L438.3 41.5 M749.9 83.8 L769.8 76.6 M408.7 298.8 L443.6 286.7 M429.5 23.0 L458.8 10.0 M438.6 242.8 L456.7 234.5 M496.0 168.2 L509.3 210.4 M270.5 418.7 L317.8 396.9 M507.0 23.0 L525.1 13.4 M732.3 370.5 L767.8 339.0 M356.2 319.8 L372.6 361.6 M306.2 91.4 L332.4 123.8 M217.9 388.2 L248.4 368.4 M198.1 324.6 L224.5 358.4 M574.7 132.7 L589.2 151.7 M633.2 321.9 L653.1 306.0 M242.2 22.6 L258.1 45.1 M706.4 308.7 L734.1 352.9 M266.0 72.1 L276.6 96.5 M521.8 143.4 L539.9 164.2 M502.8 96.6 L515.1 111.3 M406.6 288.4 L432.0 323.9 M302.9 67.0 L330.2 100.5 M255.2 372.8 L276.2 357.9 M564.0 235.9 L587.2 215.5 M617.7 223.4 L638.5 204.2 M362.7 262.8 L388.7 238.7 M627.6 344.3 L645.0 367.6 M520.7 45.3 L560.9 10.9 M564.2 22.5 L597.3 8.9 M377.8 163.8 L402.1 147.8 M229.6 251.6 L247.9 239.2 M282.0 177.0 L307.9 150.6 M245.4 291.1 L276.5 328.9 M233.5 327.4 L260.9 359.9 M241.3 2.2 L252.2 27.7 M250.7 107.4 L274.0 137.2 M257.0 210.5 L268.8 226.2 M336.0 427.2 L359.8 417.9 M262.5 107.9 L272.2 123.7 M727.7 219.8 L742.9 241.5 M617.5 69.1 L650.5 62.1 M545.8 49.3 L573.9 21.6 M323.3 267.9 L340.7 256.6 M382.3 44.1 L408.0 79.4 M654.3 153.9 L662.2 177.4 M371.0 419.1 L392.7 461.0 M274.4 230.1 L295.6 252.4 M270.0 89.2 L295.4 125.4 M228.1 1.3 L245.4 34.5 M378.1 31.1 L408.3 3.1 M672.1 354.0 L715.9 322.6 M522.2 361.5 L535.7 405.0 M266.9 372.8 L311.2 362.1 M664.5 361.0 L695.1 398.7 M637.1 391.9 L675.5 380.8 M563.5 284.6 L604.1 260.7 M333.6 377.3 L360.3 406.7 M510.1 394.9 L546.3 364.9 M642.4 307.3 L674.3 298.9 M239.6 293.6 L288.7 278.2 M433.2 137.1 L450.6 130.7 M253.0 365.6 L263.7 392.6 M273.1 245.4 L310.7 213.6 M543.0 131.5 L564.6 118.9 M697.0 183.4 L727.1 214.4 M213.7 370.3 L233.1 393.6 M276.0 75.3 L315.4 65.7 M699.5 177.5 L719.1 223.9 M640.7 273.0 L652.4 287.1 M676.5 46.7 L706.5 84.1 M333.0 158.5 L372.0 135.8 M619.3 299.7 L645.7 343.5 M569.8 34.2 L619.7 15.1 M396.2 297.5 L407.0 344.2 M224.0 294.6 L244.5 344.7 M222.5 375.7 L250.1 354.8" stroke="#dfe2e6" stroke-width="1.4" fill="none"/>
</g>
<rect x="902.7" y="227.3" width="14" height="10" fill="#f7f4ee"/>
<rect x="897.6" y="216.0" width="14" height="10" fill="#f7f4ee"/>
<rect x="738.1" y="182.0" width="14" height="10" fill="#f7f4ee"/>
<rect x="761.5" y="232.2" width="14" height="10" fill="#f7f4ee"/>
<rect x="935.0" y="167.6" width="14" height="10" fill="#f7f4ee"/>
<rect x="865.1" y="202.1" width="14" height="10" fill="#f7f4ee"/>
<rect x="740.7" y="187.4" width="14" height="10" fill="#f7f4ee"/>
<rect x="901.9" y="207.3" width="14" height="10" fill="#f7f4ee"/>
<rect x="794.6" y="217.0" width="14" height="10" fill="#f7f4ee"/>
<rect x="797.0" y="199.5" width="14" height="10" fill="#f7f4ee"/>
<rect x="826.8" y="234.3" width="14" height="10" fill="#f7f4ee"/>
<rect x="879.2" y="220.4" width="14" height="10" fill="#f7f4ee"/>
<rect x="885.6" y="186.4" width="14" height="10" fill="#f7f4ee"/>
<rect x="951.5" y="212.8" width="14" height="10" fill="#f7f4ee"/>
<rect x="888.9" y="178.2" width="14" height="10" fill="#f7f4ee"/>
<rect x="767.2" y="202.0" width="14" height="10" fill="#f7f4ee"/>
<rect x="920.0" y="219.5" width="14" height="10" fill="#f7f4ee"/>
<rect x="809.9" y="167.2" width="14" height="10" fill="#f7f4ee"/>
<rect x="848.7" y="226.2" width="14" height="10" fill="#f7f4ee"/>
<rect x="767.3" y="215.1" width="14" height="10" fill="#f7f4ee"/>
<rect x="769.3" y="181.0" width="14" height="10" fill="#f7f4ee"/>
<rect x="742.3" y="179.8" width="14" height="10" fill="#f7f4ee"/>
<rect x="818.1" y="233.4" width="14" height="10" fill="#f7f4ee"/>
<rect x="951.3" y="171.0" width="14" height="10" fill="#f7f4ee"/>
<rect x="801.2" y="231.5" width="14" height="10" fill="#f7f4ee"/>
<rect x="775.4" y="181.7" width="14" height="10" fill="#f7f4ee"/>
<rect x="830.8" y="164.7" width="14" height="10" fill="#f7f4ee"/>
<rect x="789.8" y="187.5" width="14" height="10" fill="#f7f4ee"/>
<rect x="818.7" y="233.1" width="14" height="10" fill="#f7f4ee"/>
<rect x="791.4" y="172.3" width="14" height="10" fill="#f7f4ee"/>
<rect x="939.0" y="192.0" width="14" height="10" fill="#f7f4ee"/>
<rect x="922.5" y="207.0" width="14" height="10" fill="#f7f4ee"/>
<rect x="909.1" y="181.2" width="14" height="10" fill="#f7f4ee"/>
<rect x="765.0" y="216.6" width="14" height="10" fill="#f7f4ee"/>
<rect x="838.2" y="200.7" width="14" height="10" fill="#f7f4ee"/>
<rect x="884.2" y="216.2" width="14" height="10" fill="#f7f4ee"/>
<rect x="793.3" y="185.0" width="14" height="10" fill="#f7f4ee"/>
<rect x="941.0" y="198.3" width="14" height="10" fill="#f7f4ee"/>
<rect x="796.3" y="206.4" width="14" height="10" fill="#f7f4ee"/>
<rect x="789.7" y="217.7" width="14" height="10" fill="#f7f4ee"/>
<path d="M302.0 0.0 L0.0 302.0" stroke="#d5d9de" stroke-width="4.5" fill="none" stroke-linejoin="round" stroke-linecap="round"/>
<path d="M220.0 100.0 L270.0 78.0 L370.0 48.0" stroke="#d5d9de" stroke-width="4" fill="none" stroke-linejoin="round" stroke-linecap="round"/>
<path d="M220.0 100.0 L190.0 196.0 L169.0 306.0 L240.0 366.0 L312.0 433.0" stroke="#d5d9de" stroke-width="4" fill="none" stroke-linejoin="round" stroke-linecap="round"/>
<path d="M0.0 433.0 L560.0 433.0" stroke="#d3d7dc" stroke-width="6" fill="none" stroke-linejoin="round" stroke-linecap="round"/>
<path d="M350.0 94.0 L375.0 126.0 L410.0 176.0 L435.0 236.0 L458.0 296.0 L480.0 346.0 L492.0 376.0" stroke="#cde3d6" stroke-width="4.5" fill="none" stroke-linejoin="round" stroke-linecap="round"/>
<path d="M435.0 0.0 L480.0 96.0 L540.0 206.0" stroke="#d9dce0" stroke-width="4" fill="none" stroke-linejoin="round" stroke-linecap="round"/>
<path d="M220.0 100.0 L340.0 106.0 L420.0 116.0" stroke="#d9dce0" stroke-width="3.5" fill="none" stroke-linejoin="round" stroke-linecap="round"/>
<path d="M622.0 0.0 L740.0 124.0 L800.0 148.0 L880.0 118.0" stroke="#d6dade" stroke-width="4.5" fill="none" stroke-linejoin="round" stroke-linecap="round"/>
<path d="M569.0 236.0 L640.0 276.0 L740.0 266.0 L800.0 236.0" stroke="#dcdfe3" stroke-width="3" fill="none" stroke-linejoin="round" stroke-linecap="round"/>
<path d="M916.0 0.0 L890.0 41.0 L850.0 108.0" stroke="#d6dade" stroke-width="4" fill="none" stroke-linejoin="round" stroke-linecap="round"/>
<polygon points="668.0,0.0 832.0,0.0 835.0,26.0 880.0,28.0 890.0,38.0 848.0,104.0 830.0,114.0 792.0,128.0 760.0,126.0 736.0,115.0 648.0,23.0 652.0,6.0" fill="#bfe8cf"/>
<polygon points="886.0,0.0 945.0,0.0 920.0,44.0 902.0,78.0 892.0,74.0 900.0,38.0" fill="#bfe8cf"/>
<polygon points="846.0,157.0 912.0,160.0 917.0,211.0 851.0,211.0" fill="#bfe8cf"/>
<polygon points="649.0,264.0 666.0,261.0 689.0,332.0 672.0,352.0 663.0,352.0 646.0,297.0" fill="#bfe8cf"/>
<polygon points="40.0,6.0 60.0,0.0 70.0,11.0 50.0,21.0" fill="#bfe8cf"/>
<polygon points="106.0,150.0 118.0,147.0 121.0,161.0 108.0,164.0" fill="#bfe8cf"/>
<polygon points="24.0,229.0 33.0,226.0 36.0,235.0 27.0,238.0" fill="#bfe8cf"/>
<polygon points="0.0,186.0 12.0,181.0 16.0,206.0 2.0,218.0" fill="#bfe8cf"/>
<polygon points="290.0,166.0 315.0,146.0 330.0,176.0 310.0,186.0" fill="#bfe8cf"/>
<path d="M730 36 q30 30 60 10 t50 40 M740 96 q40 -30 80 -10 M800 16 q-20 40 10 80 M680 26 l50 50 M690 16 l60 55 M780 56 q20 30 50 20 M810 96 q10 -30 40 -40" stroke="#94d2ad" stroke-width="0.9" fill="none"/>
<polygon points="879.0,116.0 920.0,86.0 960.0,71.0 960.0,181.0 920.0,176.0" fill="#f7e3e1"/>
<polygon points="730.0,261.0 800.0,221.0 900.0,236.0 875.0,316.0 830.0,436.0 760.0,436.0 770.0,336.0" fill="url(#bgrid)"/>
<polygon points="821.0,450.0 841.0,450.0 857.0,395.0 892.0,316.0 917.0,272.0 960.0,252.0 960.0,206.0 920.0,221.0 880.0,316.0 831.0,411.0" fill="#f3e6c4"/>
<polygon points="840.0,450.0 857.0,395.0 892.0,316.0 917.0,272.0 960.0,252.0 960.0,450.0" fill="#91d5ec"/>
<polygon points="644.0,293.0 650.0,298.0 663.0,352.0 624.0,436.0 618.0,450.0 550.0,450.0 555.0,436.0 576.0,403.0" fill="#91d5ec"/>
<polygon points="671.0,264.0 697.0,257.0 727.0,274.0 732.0,287.0 750.0,304.0 758.0,345.0 755.0,398.0 742.0,403.0 717.0,450.0 671.0,450.0 702.0,378.0 692.0,342.0" fill="#91d5ec"/>
<polygon points="960.0,236.0 960.0,156.0 950.0,176.0" fill="#91d5ec"/>
<path d="M543.0 450.0 L547.0 426.0 L565.0 384.0 L589.0 340.0 L614.0 295.0 L639.0 253.0 L662.0 235.0 L728.0 202.0 L804.0 169.0 L870.0 131.0 L926.0 84.0 L960.0 61.0" stroke="#cdd6e0" stroke-width="15" fill="none" stroke-linejoin="round"/>
<path d="M543.0 450.0 L547.0 426.0 L565.0 384.0 L589.0 340.0 L614.0 295.0 L639.0 253.0 L662.0 235.0 L728.0 202.0 L804.0 169.0 L870.0 131.0 L926.0 84.0 L960.0 61.0" stroke="#8da3c0" stroke-width="7" fill="none" stroke-linejoin="round"/>
<g stroke="#9fd6b4" stroke-width="0.9" fill="none"><circle cx="355" cy="58" r="14"/><circle cx="355" cy="58" r="7"/><path d="M322 48 L388 68 M340 36 L370 80 M330 71 L382 42 M319 56 L340 34 L375 38 L390 64 L370 80 L335 78 Z"/></g>
<path d="M762.0 150.0 L892.0 82.0 M762.0 153.3 L892.0 85.3 M762.0 156.6 L892.0 88.6 M762.0 159.9 L892.0 91.9 M762.0 163.2 L892.0 95.2 M762.0 166.5 L892.0 98.5 M762.0 169.8 L892.0 101.8 M762.0 173.1 L892.0 105.1" stroke="#dadde2" stroke-width="1" fill="none"/>
<ellipse cx="748" cy="7" rx="10" ry="7" fill="#91d5ec"/>
<text x="345.0" y="10.0" fill="#fff" font-size="13.5" text-anchor="start" stroke="#fff" stroke-width="3.2" stroke-linejoin="round">Urquinaona</text>
<text x="345.0" y="10.0" fill="#383d43" font-size="13.5" text-anchor="start" stroke="#383d43" stroke-width="0.35">Urquinaona</text>
<rect x="415.5" y="0.5" width="9" height="9" transform="rotate(45 420.0 5.0)" fill="#f07b20" stroke="#fff" stroke-width="1"/>
<text x="420.0" y="7.5" fill="#fff" font-size="6.5" font-weight="bold" text-anchor="middle">M</text>
<text x="463.0" y="27.0" fill="#9e5bd6" font-size="13.5" font-weight="normal" text-anchor="end" stroke="#fff" stroke-width="3" stroke-linejoin="round" paint-order="stroke">Palau de la</text>
<text x="463.0" y="41.5" fill="#9e5bd6" font-size="13.5" font-weight="normal" text-anchor="end" stroke="#fff" stroke-width="3" stroke-linejoin="round" paint-order="stroke">Música Catalana</text>
<path d="M468.0 27.0 a10 10 0 1 1 20 0 q0 7.0 -10 12.5 q-10 -5.5 -10 -12.5 z" fill="#fff" style="filter:drop-shadow(0 0.5px 0.6px rgba(0,0,0,.25))"/>
<circle cx="478.0" cy="27.0" r="8.2" fill="#a968e0"/>
<path d="M476.0 30.0 V23.0 L482.0 21.5 V29.0" stroke="#fff" stroke-width="1.4" fill="none"/><circle cx="474.8" cy="30.2" r="1.8" fill="#fff"/><circle cx="480.8" cy="29.2" r="1.8" fill="#fff"/>
<text x="196.0" y="55.0" fill="#5f6b78" font-size="13.5" font-weight="normal" text-anchor="end" stroke="#fff" stroke-width="3" stroke-linejoin="round" paint-order="stroke">Universitat</text>
<text x="196.0" y="69.0" fill="#5f6b78" font-size="13.5" font-weight="normal" text-anchor="end" stroke="#fff" stroke-width="3" stroke-linejoin="round" paint-order="stroke">de Barcelona</text>
<path d="M201.0 56.0 a10 10 0 1 1 20 0 q0 7.0 -10 12.5 q-10 -5.5 -10 -12.5 z" fill="#fff" style="filter:drop-shadow(0 0.5px 0.6px rgba(0,0,0,.25))"/>
<circle cx="211.0" cy="56.0" r="8.2" fill="#7b8a96"/>
<path d="M205.0 55.0 L211.0 51.5 L217.0 55.0 L211.0 58.5 Z M207.5 57.0 V59.5 Q211.0 61.5 214.5 59.5 V57.0" fill="#fff"/>
<text x="240.0" y="91.0" fill="#5f6b78" font-size="11.5" font-weight="normal" text-anchor="start" transform="rotate(-27 240.0 91.0)" stroke="#fff" stroke-width="3" stroke-linejoin="round" paint-order="stroke">Ronda de la Univ.</text>
<text x="337.0" y="95.0" fill="#9e5bd6" font-size="14" font-weight="normal" text-anchor="end" stroke="#fff" stroke-width="3" stroke-linejoin="round" paint-order="stroke">La Rambla</text>
<path d="M340.0 89.0 a10 10 0 1 1 20 0 q0 7.0 -10 12.5 q-10 -5.5 -10 -12.5 z" fill="#fff" style="filter:drop-shadow(0 0.5px 0.6px rgba(0,0,0,.25))"/>
<circle cx="350.0" cy="89.0" r="8.2" fill="#a968e0"/>
<path d="M345.0 87.5 L350.0 84.0 L355.0 87.5 Z M345.5 92.5 H354.5 V94.0 H345.5 Z" fill="#fff"/><path d="M346.5 88.0 V92.5 M350.0 88.0 V92.5 M353.5 88.0 V92.5" stroke="#fff" stroke-width="1.3"/>
<text x="158.0" y="104.5" fill="#fff" font-size="13" text-anchor="start" stroke="#fff" stroke-width="3.2" stroke-linejoin="round">Universitat</text>
<text x="158.0" y="104.5" fill="#383d43" font-size="13" text-anchor="start" stroke="#383d43" stroke-width="0.35">Universitat</text>
<rect x="225.5" y="95.5" width="9" height="9" transform="rotate(45 230.0 100.0)" fill="#f07b20" stroke="#fff" stroke-width="1"/>
<text x="230.0" y="102.5" fill="#fff" font-size="6.5" font-weight="bold" text-anchor="middle">M</text>
<text x="66.0" y="82.0" fill="#5f6b78" font-size="11.5" font-weight="normal" text-anchor="start" transform="rotate(51 66.0 82.0)" stroke="#fff" stroke-width="3" stroke-linejoin="round" paint-order="stroke">Carrer de Casanova</text>
<text x="114.0" y="74.0" fill="#5f6b78" font-size="11.5" font-weight="normal" text-anchor="start" transform="rotate(51 114.0 74.0)" stroke="#fff" stroke-width="3" stroke-linejoin="round" paint-order="stroke">C/ de Muntaner</text>
<text x="-2.0" y="109.0" fill="#383d43" font-size="12" font-weight="bold" text-anchor="start" letter-spacing="1.5" stroke="#fff" stroke-width="3" stroke-linejoin="round" paint-order="stroke">ERRA</text>
<text x="-2.0" y="125.0" fill="#383d43" font-size="12" font-weight="bold" text-anchor="start" letter-spacing="1.5" stroke="#fff" stroke-width="3" stroke-linejoin="round" paint-order="stroke">AMPLE</text>
<text x="265.0" y="163.0" fill="#9e5bd6" font-size="13.5" font-weight="normal" text-anchor="end" stroke="#fff" stroke-width="3" stroke-linejoin="round" paint-order="stroke">Museu d'Art</text>
<text x="266.0" y="177.0" fill="#9e5bd6" font-size="13.5" font-weight="normal" text-anchor="end" stroke="#fff" stroke-width="3" stroke-linejoin="round" paint-order="stroke">Contemporani de...</text>
<path d="M270.0 164.0 a10 10 0 1 1 20 0 q0 7.0 -10 12.5 q-10 -5.5 -10 -12.5 z" fill="#fff" style="filter:drop-shadow(0 0.5px 0.6px rgba(0,0,0,.25))"/>
<circle cx="280.0" cy="164.0" r="8.2" fill="#a968e0"/>
<path d="M275.0 162.5 L280.0 159.0 L285.0 162.5 Z M275.5 167.5 H284.5 V169.0 H275.5 Z" fill="#fff"/><path d="M276.5 163.0 V167.5 M280.0 163.0 V167.5 M283.5 163.0 V167.5" stroke="#fff" stroke-width="1.3"/>
<text x="69.0" y="189.5" fill="#fff" font-size="13" text-anchor="start" stroke="#fff" stroke-width="3.2" stroke-linejoin="round">Urgell</text>
<text x="69.0" y="189.5" fill="#383d43" font-size="13" text-anchor="start" stroke="#383d43" stroke-width="0.35">Urgell</text>
<rect x="105.5" y="180.5" width="9" height="9" transform="rotate(45 110.0 185.0)" fill="#f07b20" stroke="#fff" stroke-width="1"/>
<text x="110.0" y="187.5" fill="#fff" font-size="6.5" font-weight="bold" text-anchor="middle">M</text>
<path d="M41.0 171.0 a10 10 0 1 1 20 0 q0 7.0 -10 12.5 q-10 -5.5 -10 -12.5 z" fill="#fff" style="filter:drop-shadow(0 0.5px 0.6px rgba(0,0,0,.25))"/>
<circle cx="51.0" cy="171.0" r="8.2" fill="#f28b30"/>
<path d="M48.0 166.0 V176.0 M46.5 166.0 V169.5 Q48.0 171.0 49.5 169.5 V166.0 M53.5 176.0 V166.0 Q56.0 168.0 55.0 171.5 H53.5" stroke="#fff" stroke-width="1.3" fill="none"/>
<text x="240.0" y="215.0" fill="#1a73e8" font-size="13.5" font-weight="normal" text-anchor="start" stroke="#fff" stroke-width="3" stroke-linejoin="round" paint-order="stroke">Mercat de la Boqueria</text>
<path d="M382.0 210.0 a10 10 0 1 1 20 0 q0 7.0 -10 12.5 q-10 -5.5 -10 -12.5 z" fill="#fff" style="filter:drop-shadow(0 0.5px 0.6px rgba(0,0,0,.25))"/>
<circle cx="392.0" cy="210.0" r="8.2" fill="#1a8ae8"/>
<path d="M386.5 206.0 H388.5 L390.0 212.0 H396.0 L397.0 207.5 H389.0" stroke="#fff" stroke-width="1.5" fill="none"/><circle cx="390.5" cy="214.2" r="1.2" fill="#fff"/><circle cx="395.5" cy="214.2" r="1.2" fill="#fff"/>
<text x="392.0" y="246.0" fill="#fff" font-size="13" text-anchor="start" stroke="#fff" stroke-width="3.2" stroke-linejoin="round">Liceu</text>
<text x="392.0" y="246.0" fill="#383d43" font-size="13" text-anchor="start" stroke="#383d43" stroke-width="0.35">Liceu</text>
<rect x="427.5" y="237.5" width="9" height="9" transform="rotate(45 432.0 242.0)" fill="#f07b20" stroke="#fff" stroke-width="1"/>
<text x="432.0" y="244.5" fill="#fff" font-size="6.5" font-weight="bold" text-anchor="middle">M</text>
<text x="80.0" y="289.0" fill="#5f6b78" font-size="11.5" font-weight="normal" text-anchor="start" transform="rotate(-47 80.0 289.0)" stroke="#fff" stroke-width="3" stroke-linejoin="round" paint-order="stroke">Carrer de Sepúlveda</text>
<text x="122.0" y="287.0" fill="#fff" font-size="13" text-anchor="start" stroke="#fff" stroke-width="3.2" stroke-linejoin="round">Sant Antoni</text>
<text x="122.0" y="287.0" fill="#383d43" font-size="13" text-anchor="start" stroke="#383d43" stroke-width="0.35">Sant Antoni</text>
<rect x="193.5" y="277.5" width="9" height="9" transform="rotate(45 198.0 282.0)" fill="#f07b20" stroke="#fff" stroke-width="1"/>
<text x="198.0" y="284.5" fill="#fff" font-size="6.5" font-weight="bold" text-anchor="middle">M</text>
<text x="16.0" y="311.0" fill="#1a73e8" font-size="13.5" font-weight="normal" text-anchor="start" stroke="#fff" stroke-width="3" stroke-linejoin="round" paint-order="stroke">Mercat de Sant Antoni</text>
<path d="M159.0 305.0 a10 10 0 1 1 20 0 q0 7.0 -10 12.5 q-10 -5.5 -10 -12.5 z" fill="#fff" style="filter:drop-shadow(0 0.5px 0.6px rgba(0,0,0,.25))"/>
<circle cx="169.0" cy="305.0" r="8.2" fill="#1a8ae8"/>
<path d="M163.5 301.0 H165.5 L167.0 307.0 H173.0 L174.0 302.5 H166.0" stroke="#fff" stroke-width="1.5" fill="none"/><circle cx="167.5" cy="309.2" r="1.2" fill="#fff"/><circle cx="172.5" cy="309.2" r="1.2" fill="#fff"/>
<text x="278.0" y="290.5" fill="#383d43" font-size="12" font-weight="bold" text-anchor="start" letter-spacing="1.6" stroke="#fff" stroke-width="3" stroke-linejoin="round" paint-order="stroke">EL RAVAL</text>
<text x="67.0" y="350.0" fill="#383d43" font-size="12" font-weight="bold" text-anchor="start" letter-spacing="1.6" stroke="#fff" stroke-width="3" stroke-linejoin="round" paint-order="stroke">SANT ANTONI</text>
<text x="0.0" y="331.0" fill="#5f6b78" font-size="11.5" font-weight="normal" text-anchor="start" transform="rotate(52 0.0 331.0)" stroke="#fff" stroke-width="3" stroke-linejoin="round" paint-order="stroke">Carrer de Rocafort</text>
<text x="232.0" y="359.0" fill="#5f6b78" font-size="11.5" font-weight="normal" text-anchor="start" transform="rotate(53 232.0 359.0)" stroke="#fff" stroke-width="3" stroke-linejoin="round" paint-order="stroke">Rda. de Sant Pau</text>
<text x="438.0" y="303.0" fill="#9e5bd6" font-size="13.5" font-weight="normal" text-anchor="end" stroke="#fff" stroke-width="3" stroke-linejoin="round" paint-order="stroke">Palau Güell</text>
<path d="M442.0 298.0 a10 10 0 1 1 20 0 q0 7.0 -10 12.5 q-10 -5.5 -10 -12.5 z" fill="#fff" style="filter:drop-shadow(0 0.5px 0.6px rgba(0,0,0,.25))"/>
<circle cx="452.0" cy="298.0" r="8.2" fill="#a968e0"/>
<path d="M447.0 296.5 L452.0 293.0 L457.0 296.5 Z M447.5 301.5 H456.5 V303.0 H447.5 Z" fill="#fff"/><path d="M448.5 297.0 V301.5 M452.0 297.0 V301.5 M455.5 297.0 V301.5" stroke="#fff" stroke-width="1.3"/>
<text x="483.0" y="383.0" fill="#fff" font-size="13" text-anchor="end" stroke="#fff" stroke-width="3.2" stroke-linejoin="round">Drassanes</text>
<text x="483.0" y="383.0" fill="#383d43" font-size="13" text-anchor="end" stroke="#383d43" stroke-width="0.35">Drassanes</text>
<rect x="486.5" y="374.5" width="9" height="9" transform="rotate(45 491.0 379.0)" fill="#f07b20" stroke="#fff" stroke-width="1"/>
<text x="491.0" y="381.5" fill="#fff" font-size="6.5" font-weight="bold" text-anchor="middle">M</text>
<text x="520.0" y="398.0" fill="#9e5bd6" font-size="13.5" font-weight="normal" text-anchor="end" stroke="#fff" stroke-width="3" stroke-linejoin="round" paint-order="stroke">Monument a Colom</text>
<path d="M525.0 392.0 a10 10 0 1 1 20 0 q0 7.0 -10 12.5 q-10 -5.5 -10 -12.5 z" fill="#fff" style="filter:drop-shadow(0 0.5px 0.6px rgba(0,0,0,.25))"/>
<circle cx="535.0" cy="392.0" r="8.2" fill="#a968e0"/>
<rect x="529.5" y="389.0" width="11" height="7.5" rx="1.2" fill="#fff"/><rect x="532.5" y="387.0" width="5" height="2.5" fill="#fff"/><circle cx="535.0" cy="392.8" r="2.2" fill="#a968e0"/>
<text x="62.0" y="437.0" fill="#fff" font-size="13" text-anchor="start" stroke="#fff" stroke-width="3.2" stroke-linejoin="round">Poble Sec</text>
<text x="62.0" y="437.0" fill="#383d43" font-size="13" text-anchor="start" stroke="#383d43" stroke-width="0.35">Poble Sec</text>
<rect x="121.5" y="428.5" width="9" height="9" transform="rotate(45 126.0 433.0)" fill="#f07b20" stroke="#fff" stroke-width="1"/>
<text x="126.0" y="435.5" fill="#fff" font-size="6.5" font-weight="bold" text-anchor="middle">M</text>
<text x="144.0" y="437.0" fill="#fff" font-size="13" text-anchor="start" stroke="#fff" stroke-width="3.2" stroke-linejoin="round">Avinguda del Paral·lel</text>
<text x="144.0" y="437.0" fill="#383d43" font-size="13" text-anchor="start" stroke="#383d43" stroke-width="0.35">Avinguda del Paral·lel</text>
<rect x="306.5" y="425.5" width="9" height="9" transform="rotate(45 311.0 430.0)" fill="#f07b20" stroke="#fff" stroke-width="1"/>
<text x="311.0" y="432.5" fill="#fff" font-size="6.5" font-weight="bold" text-anchor="middle">M</text>
<text x="360.0" y="442.0" fill="#5f6b78" font-size="13.5" font-weight="normal" text-anchor="start" stroke="#fff" stroke-width="3" stroke-linejoin="round" paint-order="stroke">Sala Apolo</text>
<path d="M334.0 437.0 a10 10 0 1 1 20 0 q0 7.0 -10 12.5 q-10 -5.5 -10 -12.5 z" fill="#fff" style="filter:drop-shadow(0 0.5px 0.6px rgba(0,0,0,.25))"/>
<circle cx="344.0" cy="437.0" r="8.2" fill="#7b8a96"/>
<circle cx="344.0" cy="437.0" r="3.8" fill="#fff"/>
<text x="567.0" y="346.0" fill="#5f6b78" font-size="12.5" font-weight="bold" text-anchor="start" transform="rotate(-58 567.0 346.0)" stroke="#fff" stroke-width="3" stroke-linejoin="round" paint-order="stroke">Pg. de Colom</text>
<text x="564.0" y="308.0" fill="#5f6b78" font-size="11.5" font-weight="normal" text-anchor="start" transform="rotate(-58 564.0 308.0)" stroke="#fff" stroke-width="3" stroke-linejoin="round" paint-order="stroke">Carrer Ample</text>
<text x="518.0" y="368.0" fill="#9e5bd6" font-size="13.5" font-weight="normal" text-anchor="start" stroke="#fff" stroke-width="3" stroke-linejoin="round" paint-order="stroke">L'Aquàrium de Barcelona</text>
<path d="M678.0 362.0 a10 10 0 1 1 20 0 q0 7.0 -10 12.5 q-10 -5.5 -10 -12.5 z" fill="#fff" style="filter:drop-shadow(0 0.5px 0.6px rgba(0,0,0,.25))"/>
<circle cx="688.0" cy="362.0" r="8.2" fill="#a968e0"/>
<path d="M684.0 366.0 Q685.0 358.0 692.0 358.0 L690.0 361.0 Q688.0 363.0 689.0 367.0 Z" fill="#fff"/>
<text x="618.0" y="420.0" fill="#9e5bd6" font-size="13.5" font-weight="normal" text-anchor="start" stroke="#fff" stroke-width="3" stroke-linejoin="round" paint-order="stroke">Rambla de Mar</text>
<path d="M592.0 413.0 a10 10 0 1 1 20 0 q0 7.0 -10 12.5 q-10 -5.5 -10 -12.5 z" fill="#fff" style="filter:drop-shadow(0 0.5px 0.6px rgba(0,0,0,.25))"/>
<circle cx="602.0" cy="413.0" r="8.2" fill="#a968e0"/>
<rect x="596.5" y="410.0" width="11" height="7.5" rx="1.2" fill="#fff"/><rect x="599.5" y="408.0" width="5" height="2.5" fill="#fff"/><circle cx="602.0" cy="413.8" r="2.2" fill="#a968e0"/>
<text x="740.0" y="238.0" fill="#9e5bd6" font-size="13.5" font-weight="normal" text-anchor="start" stroke="#fff" stroke-width="3" stroke-linejoin="round" paint-order="stroke">Museu d'Història</text>
<text x="740.0" y="253.0" fill="#9e5bd6" font-size="13.5" font-weight="normal" text-anchor="start" stroke="#fff" stroke-width="3" stroke-linejoin="round" paint-order="stroke">de Catalunya</text>
<path d="M714.0 238.0 a10 10 0 1 1 20 0 q0 7.0 -10 12.5 q-10 -5.5 -10 -12.5 z" fill="#fff" style="filter:drop-shadow(0 0.5px 0.6px rgba(0,0,0,.25))"/>
<circle cx="724.0" cy="238.0" r="8.2" fill="#a968e0"/>
<path d="M719.0 236.5 L724.0 233.0 L729.0 236.5 Z M719.5 241.5 H728.5 V243.0 H719.5 Z" fill="#fff"/><path d="M720.5 237.0 V241.5 M724.0 237.0 V241.5 M727.5 237.0 V241.5" stroke="#fff" stroke-width="1.3"/>
<text x="751.0" y="279.0" fill="#383d43" font-size="12" font-weight="bold" text-anchor="start" letter-spacing="1.6" stroke="#fff" stroke-width="3" stroke-linejoin="round" paint-order="stroke">LA BARCELONETA</text>
<text x="864.0" y="314.0" fill="#1e8e5a" font-size="13.5" font-weight="normal" text-anchor="end" stroke="#fff" stroke-width="3" stroke-linejoin="round" paint-order="stroke">Playa de la</text>
<text x="864.0" y="328.0" fill="#1e8e5a" font-size="13.5" font-weight="normal" text-anchor="end" stroke="#fff" stroke-width="3" stroke-linejoin="round" paint-order="stroke">Barceloneta</text>
<path d="M867.0 313.0 a10 10 0 1 1 20 0 q0 7.0 -10 12.5 q-10 -5.5 -10 -12.5 z" fill="#fff" style="filter:drop-shadow(0 0.5px 0.6px rgba(0,0,0,.25))"/>
<circle cx="877.0" cy="313.0" r="8.2" fill="#1e9e6a"/>
<path d="M871.5 312.5 Q875.0 306.5 881.5 309.5 Z" fill="#fff"/><path d="M876.5 310.5 L880.0 318.0 M872.0 318.0 H882.0" stroke="#fff" stroke-width="1.3"/>
<text x="835.0" y="364.0" fill="#1e8e5a" font-size="13.5" font-weight="normal" text-anchor="end" stroke="#fff" stroke-width="3" stroke-linejoin="round" paint-order="stroke">Platja de</text>
<text x="835.0" y="378.0" fill="#1e8e5a" font-size="13.5" font-weight="normal" text-anchor="end" stroke="#fff" stroke-width="3" stroke-linejoin="round" paint-order="stroke">Sant Miquel</text>
<path d="M839.0 361.0 a10 10 0 1 1 20 0 q0 7.0 -10 12.5 q-10 -5.5 -10 -12.5 z" fill="#fff" style="filter:drop-shadow(0 0.5px 0.6px rgba(0,0,0,.25))"/>
<circle cx="849.0" cy="361.0" r="8.2" fill="#1e9e6a"/>
<path d="M843.5 360.5 Q847.0 354.5 853.5 357.5 Z" fill="#fff"/><path d="M848.5 358.5 L852.0 366.0 M844.0 366.0 H854.0" stroke="#fff" stroke-width="1.3"/>
<text x="697.0" y="28.0" fill="#1e8e5a" font-size="13.5" font-weight="normal" text-anchor="start" stroke="#fff" stroke-width="3" stroke-linejoin="round" paint-order="stroke">Parc de la</text>
<text x="697.0" y="42.0" fill="#1e8e5a" font-size="13.5" font-weight="normal" text-anchor="start" stroke="#fff" stroke-width="3" stroke-linejoin="round" paint-order="stroke">Ciutadella</text>
<text x="739.0" y="75.0" fill="#1e8e5a" font-size="13.5" font-weight="normal" text-anchor="end" stroke="#fff" stroke-width="3" stroke-linejoin="round" paint-order="stroke">Zoo de Barcelona</text>
<path d="M744.0 67.0 a10 10 0 1 1 20 0 q0 7.0 -10 12.5 q-10 -5.5 -10 -12.5 z" fill="#fff" style="filter:drop-shadow(0 0.5px 0.6px rgba(0,0,0,.25))"/>
<circle cx="754.0" cy="67.0" r="8.2" fill="#1e9e6a"/>
<ellipse cx="754.0" cy="69.0" rx="3.2" ry="2.6" fill="#fff"/><circle cx="750.0" cy="65.5" r="1.4" fill="#fff"/><circle cx="752.5" cy="63.0" r="1.4" fill="#fff"/><circle cx="755.5" cy="63.0" r="1.4" fill="#fff"/><circle cx="758.0" cy="65.5" r="1.4" fill="#fff"/>
<text x="625.0" y="100.0" fill="#9e5bd6" font-size="13.5" font-weight="normal" text-anchor="start" stroke="#fff" stroke-width="3" stroke-linejoin="round" paint-order="stroke">Museu Picasso</text>
<text x="625.0" y="114.0" fill="#9e5bd6" font-size="13.5" font-weight="normal" text-anchor="start" stroke="#fff" stroke-width="3" stroke-linejoin="round" paint-order="stroke">de Barcelona</text>
<path d="M599.0 98.0 a10 10 0 1 1 20 0 q0 7.0 -10 12.5 q-10 -5.5 -10 -12.5 z" fill="#fff" style="filter:drop-shadow(0 0.5px 0.6px rgba(0,0,0,.25))"/>
<circle cx="609.0" cy="98.0" r="8.2" fill="#a968e0"/>
<path d="M604.0 96.5 L609.0 93.0 L614.0 96.5 Z M604.5 101.5 H613.5 V103.0 H604.5 Z" fill="#fff"/><path d="M605.5 97.0 V101.5 M609.0 97.0 V101.5 M612.5 97.0 V101.5" stroke="#fff" stroke-width="1.3"/>
<text x="530.0" y="73.0" fill="#1a73e8" font-size="13.5" font-weight="normal" text-anchor="end" stroke="#fff" stroke-width="3" stroke-linejoin="round" paint-order="stroke">Mercat de Santa Caterina</text>
<path d="M535.0 65.0 a10 10 0 1 1 20 0 q0 7.0 -10 12.5 q-10 -5.5 -10 -12.5 z" fill="#fff" style="filter:drop-shadow(0 0.5px 0.6px rgba(0,0,0,.25))"/>
<circle cx="545.0" cy="65.0" r="8.2" fill="#1a8ae8"/>
<path d="M539.5 61.0 H541.5 L543.0 67.0 H549.0 L550.0 62.5 H542.0" stroke="#fff" stroke-width="1.5" fill="none"/><circle cx="543.5" cy="69.2" r="1.2" fill="#fff"/><circle cx="548.5" cy="69.2" r="1.2" fill="#fff"/>
<text x="512.0" y="148.0" fill="#5f6b78" font-size="13.5" font-weight="normal" text-anchor="start" stroke="#fff" stroke-width="3" stroke-linejoin="round" paint-order="stroke">Catedral de Barcelona</text>
<path d="M491.0 140.0 a10 10 0 1 1 20 0 q0 7.0 -10 12.5 q-10 -5.5 -10 -12.5 z" fill="#fff" style="filter:drop-shadow(0 0.5px 0.6px rgba(0,0,0,.25))"/>
<circle cx="501.0" cy="140.0" r="8.2" fill="#7b8a96"/>
<path d="M501.0 134.5 V145.5 M497.5 138.0 H504.5" stroke="#fff" stroke-width="1.8"/>
<text x="560.0" y="164.0" fill="#fff" font-size="13" text-anchor="start" stroke="#fff" stroke-width="3.2" stroke-linejoin="round">Jaume I</text>
<text x="560.0" y="164.0" fill="#383d43" font-size="13" text-anchor="start" stroke="#383d43" stroke-width="0.35">Jaume I</text>
<rect x="545.5" y="155.5" width="9" height="9" transform="rotate(45 550.0 160.0)" fill="#f07b20" stroke="#fff" stroke-width="1"/>
<text x="550.0" y="162.5" fill="#fff" font-size="6.5" font-weight="bold" text-anchor="middle">M</text>
<text x="482.0" y="191.0" fill="#5f6b78" font-size="13.5" font-weight="normal" text-anchor="start" stroke="#fff" stroke-width="3" stroke-linejoin="round" paint-order="stroke">Basílica de Santa</text>
<text x="482.0" y="205.0" fill="#5f6b78" font-size="13.5" font-weight="normal" text-anchor="start" stroke="#fff" stroke-width="3" stroke-linejoin="round" paint-order="stroke">Maria del Pi</text>
<path d="M431.0 191.0 a10 10 0 1 1 20 0 q0 7.0 -10 12.5 q-10 -5.5 -10 -12.5 z" fill="#fff" style="filter:drop-shadow(0 0.5px 0.6px rgba(0,0,0,.25))"/>
<circle cx="441.0" cy="191.0" r="8.2" fill="#7b8a96"/>
<path d="M441.0 185.5 V196.5 M437.5 189.0 H444.5" stroke="#fff" stroke-width="1.8"/>
<text x="465.0" y="224.0" fill="#383d43" font-size="12" font-weight="bold" text-anchor="start" letter-spacing="1.6" stroke="#fff" stroke-width="3" stroke-linejoin="round" paint-order="stroke">GOTHIC QUARTER</text>
<text x="617.0" y="169.0" fill="#383d43" font-size="12" font-weight="bold" text-anchor="start" letter-spacing="1.6" stroke="#fff" stroke-width="3" stroke-linejoin="round" paint-order="stroke">LA RIBERA</text>
<text x="646.0" y="209.0" fill="#fff" font-size="13" text-anchor="start" stroke="#fff" stroke-width="3.2" stroke-linejoin="round">Barceloneta</text>
<text x="646.0" y="209.0" fill="#383d43" font-size="13" text-anchor="start" stroke="#383d43" stroke-width="0.35">Barceloneta</text>
<rect x="718.5" y="199.5" width="9" height="9" transform="rotate(45 723.0 204.0)" fill="#f07b20" stroke="#fff" stroke-width="1"/>
<text x="723.0" y="206.5" fill="#fff" font-size="6.5" font-weight="bold" text-anchor="middle">M</text>
<text x="906.0" y="152.0" fill="#d93025" font-size="13.5" font-weight="normal" text-anchor="end" stroke="#fff" stroke-width="3" stroke-linejoin="round" paint-order="stroke">Hospital del Mar</text>
<path d="M911.0 144.0 a10 10 0 1 1 20 0 q0 7.0 -10 12.5 q-10 -5.5 -10 -12.5 z" fill="#fff" style="filter:drop-shadow(0 0.5px 0.6px rgba(0,0,0,.25))"/>
<circle cx="921.0" cy="144.0" r="8.2" fill="#e0393e"/>
<text x="921.0" y="148.5" fill="#fff" font-size="12.5" font-weight="bold" text-anchor="middle">H</text>
<text x="928.0" y="119.0" fill="#9e5bd6" font-size="13.5" font-weight="normal" text-anchor="start" stroke="#fff" stroke-width="3" stroke-linejoin="round" paint-order="stroke">BCNa</text>
<circle cx="866" cy="41" r="5" fill="#3b95e8" stroke="#fff" stroke-width="1"/>
<text x="852.0" y="199.0" fill="#1e8e5a" font-size="13.5" font-weight="normal" text-anchor="start" stroke="#fff" stroke-width="3" stroke-linejoin="round" paint-order="stroke">Parc de la</text>
<text x="846.0" y="213.0" fill="#1e8e5a" font-size="13.5" font-weight="normal" text-anchor="start" stroke="#fff" stroke-width="3" stroke-linejoin="round" paint-order="stroke">Barceloneta</text>
<rect x="890.5" y="24.5" width="9" height="9" transform="rotate(45 895.0 29.0)" fill="#f07b20" stroke="#fff" stroke-width="1"/>
<text x="895.0" y="31.5" fill="#fff" font-size="6.5" font-weight="bold" text-anchor="middle">M</text>
<text x="902.0" y="34.0" fill="#fff" font-size="13" text-anchor="start" stroke="#fff" stroke-width="3.2" stroke-linejoin="round">Ciutadella</text>
<text x="902.0" y="34.0" fill="#383d43" font-size="13" text-anchor="start" stroke="#383d43" stroke-width="0.35">Ciutadella</text>
<text x="652.0" y="16.0" fill="#5f6b78" font-size="11.5" font-weight="normal" text-anchor="start" transform="rotate(-50 652.0 16.0)" stroke="#fff" stroke-width="3" stroke-linejoin="round" paint-order="stroke">Pass</text>
<text x="125.0" y="12.0" fill="#5f6b78" font-size="11.5" font-weight="normal" text-anchor="start" transform="rotate(-50 125.0 12.0)" stroke="#fff" stroke-width="3" stroke-linejoin="round" paint-order="stroke">Carre</text>
<path d="M942.0 146.0 a10 10 0 1 1 20 0 q0 7.0 -10 12.5 q-10 -5.5 -10 -12.5 z" fill="#fff" style="filter:drop-shadow(0 0.5px 0.6px rgba(0,0,0,.25))"/>
<circle cx="952.0" cy="146.0" r="8.2" fill="#1e9e6a"/>
<path d="M946.5 145.5 Q950.0 139.5 956.5 142.5 Z" fill="#fff"/><path d="M951.5 143.5 L955.0 151.0 M947.0 151.0 H957.0" stroke="#fff" stroke-width="1.3"/>
<rect x="927.0" y="59.0" width="16" height="13" rx="2" fill="#f6d54a" stroke="#fff" stroke-width="1"/>
<text x="935.0" y="69.5" fill="#4a4a2a" font-size="10" font-weight="bold" text-anchor="middle">22</text>
<rect x="808.0" y="158.0" width="16" height="13" rx="2" fill="#f6d54a" stroke="#fff" stroke-width="1"/>
<text x="816.0" y="168.5" fill="#4a4a2a" font-size="10" font-weight="bold" text-anchor="middle">22</text>
<rect x="638.0" y="243.0" width="24" height="13" rx="2" fill="#3b78c8" stroke="#fff" stroke-width="1"/>
<text x="650.0" y="253.5" fill="#fff" font-size="10" font-weight="bold" text-anchor="middle">B-10</text>
<rect x="545.0" y="425.0" width="16" height="13" rx="2" fill="#f6d54a" stroke="#fff" stroke-width="1"/>
<text x="553.0" y="435.5" fill="#4a4a2a" font-size="10" font-weight="bold" text-anchor="middle">21</text>
<circle cx="371" cy="88" r="5.0" fill="#d3a69e" stroke="#000" stroke-width="3.2"/>
<circle cx="357" cy="114" r="5.0" fill="#d3a69e" stroke="#000" stroke-width="3.2"/>
<circle cx="370" cy="132" r="5.0" fill="#d3a69e" stroke="#000" stroke-width="3.2"/>
<circle cx="392" cy="96" r="5.0" fill="#d3a69e" stroke="#000" stroke-width="3.2"/>
<circle cx="396" cy="104" r="5.0" fill="#d3a69e" stroke="#000" stroke-width="3.2"/>
<circle cx="407" cy="131" r="5.0" fill="#d3a69e" stroke="#000" stroke-width="3.2"/>
<circle cx="407" cy="155" r="5.0" fill="#d3a69e" stroke="#000" stroke-width="3.2"/>
<circle cx="452" cy="84" r="5.0" fill="#d3a69e" stroke="#000" stroke-width="3.2"/>
<circle cx="442" cy="97" r="5.0" fill="#d3a69e" stroke="#000" stroke-width="3.2"/>
<circle cx="452" cy="138" r="5.0" fill="#d3a69e" stroke="#000" stroke-width="3.2"/>
<circle cx="447" cy="154" r="5.0" fill="#d3a69e" stroke="#000" stroke-width="3.2"/>
<circle cx="485" cy="151" r="5.0" fill="#d3a69e" stroke="#000" stroke-width="3.2"/>
<circle cx="492" cy="164" r="5.0" fill="#d3a69e" stroke="#000" stroke-width="3.2"/>
<circle cx="529" cy="148" r="5.0" fill="#d3a69e" stroke="#000" stroke-width="3.2"/>
<circle cx="521" cy="172" r="5.0" fill="#d3a69e" stroke="#000" stroke-width="3.2"/>
<circle cx="458" cy="170" r="5.0" fill="#d3a69e" stroke="#000" stroke-width="3.2"/>
<circle cx="473" cy="170" r="5.0" fill="#d3a69e" stroke="#000" stroke-width="3.2"/>
<circle cx="567" cy="174" r="5.0" fill="#d3a69e" stroke="#000" stroke-width="3.2"/>
<circle cx="587" cy="97" r="5.0" fill="#d3a69e" stroke="#000" stroke-width="3.2"/>
<circle cx="575" cy="110" r="5.0" fill="#d3a69e" stroke="#000" stroke-width="3.2"/>
<circle cx="592" cy="126" r="5.0" fill="#d3a69e" stroke="#000" stroke-width="3.2"/>
<circle cx="583" cy="131" r="5.0" fill="#d3a69e" stroke="#000" stroke-width="3.2"/>
<circle cx="632" cy="120" r="5.0" fill="#d3a69e" stroke="#000" stroke-width="3.2"/>
<circle cx="626" cy="134" r="5.0" fill="#d3a69e" stroke="#000" stroke-width="3.2"/>
<circle cx="658" cy="126" r="5.0" fill="#d3a69e" stroke="#000" stroke-width="3.2"/>
<circle cx="600" cy="163" r="5.0" fill="#d3a69e" stroke="#000" stroke-width="3.2"/>
<circle cx="644" cy="162" r="5.0" fill="#d3a69e" stroke="#000" stroke-width="3.2"/>
<circle cx="450" cy="201" r="5.0" fill="#d3a69e" stroke="#000" stroke-width="3.2"/>
<circle cx="457" cy="208" r="5.0" fill="#d3a69e" stroke="#000" stroke-width="3.2"/>
<circle cx="458" cy="212" r="5.0" fill="#d3a69e" stroke="#000" stroke-width="3.2"/>
<circle cx="483" cy="219" r="5.0" fill="#d3a69e" stroke="#000" stroke-width="3.2"/>
<circle cx="493" cy="228" r="5.0" fill="#d3a69e" stroke="#000" stroke-width="3.2"/>
<circle cx="499" cy="201" r="5.0" fill="#d3a69e" stroke="#000" stroke-width="3.2"/>
<circle cx="512" cy="196" r="5.0" fill="#d3a69e" stroke="#000" stroke-width="3.2"/>
<circle cx="520" cy="195" r="5.0" fill="#d3a69e" stroke="#000" stroke-width="3.2"/>
<circle cx="557" cy="225" r="5.0" fill="#d3a69e" stroke="#000" stroke-width="3.2"/>
<circle cx="574" cy="225" r="5.0" fill="#d3a69e" stroke="#000" stroke-width="3.2"/>
<circle cx="524" cy="248" r="5.0" fill="#d3a69e" stroke="#000" stroke-width="3.2"/>
<circle cx="525" cy="263" r="5.0" fill="#d3a69e" stroke="#000" stroke-width="3.2"/>
<circle cx="440" cy="252" r="5.0" fill="#d3a69e" stroke="#000" stroke-width="3.2"/>
<circle cx="470" cy="257" r="5.0" fill="#d3a69e" stroke="#000" stroke-width="3.2"/>
<circle cx="476" cy="271" r="5.0" fill="#d3a69e" stroke="#000" stroke-width="3.2"/>
<circle cx="302" cy="185" r="5.0" fill="#d3a69e" stroke="#000" stroke-width="3.2"/>
<circle cx="323" cy="190" r="5.0" fill="#d3a69e" stroke="#000" stroke-width="3.2"/>
<circle cx="350" cy="242" r="5.0" fill="#d3a69e" stroke="#000" stroke-width="3.2"/>
<circle cx="375" cy="258" r="5.0" fill="#d3a69e" stroke="#000" stroke-width="3.2"/>
<circle cx="392" cy="224" r="5.0" fill="#d3a69e" stroke="#000" stroke-width="3.2"/>
<circle cx="409" cy="207" r="5.0" fill="#d3a69e" stroke="#000" stroke-width="3.2"/>
<circle cx="408" cy="213" r="5.0" fill="#d3a69e" stroke="#000" stroke-width="3.2"/>
<circle cx="586" cy="213" r="5.0" fill="#d3a69e" stroke="#000" stroke-width="3.2"/>
<circle cx="456" cy="303" r="5.0" fill="#d3a69e" stroke="#000" stroke-width="3.2"/>
<circle cx="505" cy="325" r="5.0" fill="#d3a69e" stroke="#000" stroke-width="3.2"/>
<circle cx="505" cy="364" r="5.0" fill="#d3a69e" stroke="#000" stroke-width="3.2"/>
<path d="M443.4 62.6 A9.3 9.3 0 1 1 460.6 62.6 Q455.2 71.0 452.0 83.0 Q448.8 71.0 443.4 62.6 Z" fill="#1460dc" stroke="#0a3a98" stroke-width="0.9"/>
<text x="452.0" y="60.5" fill="#0a1530" font-size="8.6" font-weight="bold" text-anchor="middle" letter-spacing="0.2">11</text>
<path d="M362.4 66.6 A9.3 9.3 0 1 1 379.6 66.6 Q374.2 75.0 371.0 87.0 Q367.8 75.0 362.4 66.6 Z" fill="#1460dc" stroke="#0a3a98" stroke-width="0.9"/>
<text x="371.0" y="64.5" fill="#0a1530" font-size="8.6" font-weight="bold" text-anchor="middle" letter-spacing="0.2">12</text>
<path d="M383.4 74.6 A9.3 9.3 0 1 1 400.6 74.6 Q395.2 83.0 392.0 95.0 Q388.8 83.0 383.4 74.6 Z" fill="#1460dc" stroke="#0a3a98" stroke-width="0.9"/>
<text x="392.0" y="72.5" fill="#0a1530" font-size="8.6" font-weight="bold" text-anchor="middle" letter-spacing="0.2">25</text>
<path d="M433.4 75.6 A9.3 9.3 0 1 1 450.6 75.6 Q445.2 84.0 442.0 96.0 Q438.8 84.0 433.4 75.6 Z" fill="#1460dc" stroke="#0a3a98" stroke-width="0.9"/>
<text x="442.0" y="73.5" fill="#0a1530" font-size="8.6" font-weight="bold" text-anchor="middle" letter-spacing="0.2">46</text>
<path d="M578.4 75.6 A9.3 9.3 0 1 1 595.6 75.6 Q590.2 84.0 587.0 96.0 Q583.8 84.0 578.4 75.6 Z" fill="#1460dc" stroke="#0a3a98" stroke-width="0.9"/>
<text x="587.0" y="73.5" fill="#0a1530" font-size="8.6" font-weight="bold" text-anchor="middle" letter-spacing="0.2">30</text>
<path d="M387.4 82.6 A9.3 9.3 0 1 1 404.6 82.6 Q399.2 91.0 396.0 103.0 Q392.8 91.0 387.4 82.6 Z" fill="#1460dc" stroke="#0a3a98" stroke-width="0.9"/>
<text x="396.0" y="80.5" fill="#0a1530" font-size="8.6" font-weight="bold" text-anchor="middle" letter-spacing="0.2">32</text>
<path d="M566.4 88.6 A9.3 9.3 0 1 1 583.6 88.6 Q578.2 97.0 575.0 109.0 Q571.8 97.0 566.4 88.6 Z" fill="#1460dc" stroke="#0a3a98" stroke-width="0.9"/>
<text x="575.0" y="86.5" fill="#0a1530" font-size="8.6" font-weight="bold" text-anchor="middle" letter-spacing="0.2">17</text>
<path d="M348.4 92.6 A9.3 9.3 0 1 1 365.6 92.6 Q360.2 101.0 357.0 113.0 Q353.8 101.0 348.4 92.6 Z" fill="#1460dc" stroke="#0a3a98" stroke-width="0.9"/>
<text x="357.0" y="90.5" fill="#0a1530" font-size="8.6" font-weight="bold" text-anchor="middle" letter-spacing="0.2">43</text>
<path d="M623.4 98.6 A9.3 9.3 0 1 1 640.6 98.6 Q635.2 107.0 632.0 119.0 Q628.8 107.0 623.4 98.6 Z" fill="#1460dc" stroke="#0a3a98" stroke-width="0.9"/>
<text x="632.0" y="96.5" fill="#0a1530" font-size="8.6" font-weight="bold" text-anchor="middle" letter-spacing="0.2">26</text>
<path d="M583.4 104.6 A9.3 9.3 0 1 1 600.6 104.6 Q595.2 113.0 592.0 125.0 Q588.8 113.0 583.4 104.6 Z" fill="#1460dc" stroke="#0a3a98" stroke-width="0.9"/>
<text x="592.0" y="102.5" fill="#0a1530" font-size="8.6" font-weight="bold" text-anchor="middle" letter-spacing="0.2">10</text>
<path d="M649.4 104.6 A9.3 9.3 0 1 1 666.6 104.6 Q661.2 113.0 658.0 125.0 Q654.8 113.0 649.4 104.6 Z" fill="#1460dc" stroke="#0a3a98" stroke-width="0.9"/>
<text x="658.0" y="102.5" fill="#0a1530" font-size="8.6" font-weight="bold" text-anchor="middle" letter-spacing="0.2">33</text>
<path d="M398.4 109.6 A9.3 9.3 0 1 1 415.6 109.6 Q410.2 118.0 407.0 130.0 Q403.8 118.0 398.4 109.6 Z" fill="#1460dc" stroke="#0a3a98" stroke-width="0.9"/>
<text x="407.0" y="107.5" fill="#0a1530" font-size="8.6" font-weight="bold" text-anchor="middle" letter-spacing="0.2">34</text>
<path d="M574.4 109.6 A9.3 9.3 0 1 1 591.6 109.6 Q586.2 118.0 583.0 130.0 Q579.8 118.0 574.4 109.6 Z" fill="#1460dc" stroke="#0a3a98" stroke-width="0.9"/>
<text x="583.0" y="107.5" fill="#0a1530" font-size="8.6" font-weight="bold" text-anchor="middle" letter-spacing="0.2">27</text>
<path d="M361.4 110.6 A9.3 9.3 0 1 1 378.6 110.6 Q373.2 119.0 370.0 131.0 Q366.8 119.0 361.4 110.6 Z" fill="#1460dc" stroke="#0a3a98" stroke-width="0.9"/>
<text x="370.0" y="108.5" fill="#0a1530" font-size="8.6" font-weight="bold" text-anchor="middle" letter-spacing="0.2">51</text>
<path d="M617.4 112.6 A9.3 9.3 0 1 1 634.6 112.6 Q629.2 121.0 626.0 133.0 Q622.8 121.0 617.4 112.6 Z" fill="#1460dc" stroke="#0a3a98" stroke-width="0.9"/>
<text x="626.0" y="110.5" fill="#0a1530" font-size="8.6" font-weight="bold" text-anchor="middle" letter-spacing="0.2">42</text>
<path d="M443.4 116.6 A9.3 9.3 0 1 1 460.6 116.6 Q455.2 125.0 452.0 137.0 Q448.8 125.0 443.4 116.6 Z" fill="#1460dc" stroke="#0a3a98" stroke-width="0.9"/>
<text x="452.0" y="114.5" fill="#0a1530" font-size="8.6" font-weight="bold" text-anchor="middle" letter-spacing="0.2">47</text>
<path d="M520.4 126.6 A9.3 9.3 0 1 1 537.6 126.6 Q532.2 135.0 529.0 147.0 Q525.8 135.0 520.4 126.6 Z" fill="#1460dc" stroke="#0a3a98" stroke-width="0.9"/>
<text x="529.0" y="124.5" fill="#0a1530" font-size="8.6" font-weight="bold" text-anchor="middle" letter-spacing="0.2">21</text>
<path d="M476.4 129.6 A9.3 9.3 0 1 1 493.6 129.6 Q488.2 138.0 485.0 150.0 Q481.8 138.0 476.4 129.6 Z" fill="#1460dc" stroke="#0a3a98" stroke-width="0.9"/>
<text x="485.0" y="127.5" fill="#0a1530" font-size="8.6" font-weight="bold" text-anchor="middle" letter-spacing="0.2">52</text>
<path d="M438.4 132.6 A9.3 9.3 0 1 1 455.6 132.6 Q450.2 141.0 447.0 153.0 Q443.8 141.0 438.4 132.6 Z" fill="#1460dc" stroke="#0a3a98" stroke-width="0.9"/>
<text x="447.0" y="130.5" fill="#0a1530" font-size="8.6" font-weight="bold" text-anchor="middle" letter-spacing="0.2">20</text>
<path d="M398.4 133.6 A9.3 9.3 0 1 1 415.6 133.6 Q410.2 142.0 407.0 154.0 Q403.8 142.0 398.4 133.6 Z" fill="#1460dc" stroke="#0a3a98" stroke-width="0.9"/>
<text x="407.0" y="131.5" fill="#0a1530" font-size="8.6" font-weight="bold" text-anchor="middle" letter-spacing="0.2">3</text>
<path d="M635.4 140.6 A9.3 9.3 0 1 1 652.6 140.6 Q647.2 149.0 644.0 161.0 Q640.8 149.0 635.4 140.6 Z" fill="#1460dc" stroke="#0a3a98" stroke-width="0.9"/>
<text x="644.0" y="138.5" fill="#0a1530" font-size="8.6" font-weight="bold" text-anchor="middle" letter-spacing="0.2">24</text>
<path d="M591.4 141.6 A9.3 9.3 0 1 1 608.6 141.6 Q603.2 150.0 600.0 162.0 Q596.8 150.0 591.4 141.6 Z" fill="#1460dc" stroke="#0a3a98" stroke-width="0.9"/>
<text x="600.0" y="139.5" fill="#0a1530" font-size="8.6" font-weight="bold" text-anchor="middle" letter-spacing="0.2">15</text>
<path d="M483.4 142.6 A9.3 9.3 0 1 1 500.6 142.6 Q495.2 151.0 492.0 163.0 Q488.8 151.0 483.4 142.6 Z" fill="#1460dc" stroke="#0a3a98" stroke-width="0.9"/>
<text x="492.0" y="140.5" fill="#0a1530" font-size="8.6" font-weight="bold" text-anchor="middle" letter-spacing="0.2">48</text>
<path d="M449.4 148.6 A9.3 9.3 0 1 1 466.6 148.6 Q461.2 157.0 458.0 169.0 Q454.8 157.0 449.4 148.6 Z" fill="#1460dc" stroke="#0a3a98" stroke-width="0.9"/>
<text x="458.0" y="146.5" fill="#0a1530" font-size="8.6" font-weight="bold" text-anchor="middle" letter-spacing="0.2">18</text>
<path d="M464.4 148.6 A9.3 9.3 0 1 1 481.6 148.6 Q476.2 157.0 473.0 169.0 Q469.8 157.0 464.4 148.6 Z" fill="#1460dc" stroke="#0a3a98" stroke-width="0.9"/>
<text x="473.0" y="146.5" fill="#0a1530" font-size="8.6" font-weight="bold" text-anchor="middle" letter-spacing="0.2">35</text>
<path d="M512.4 150.6 A9.3 9.3 0 1 1 529.6 150.6 Q524.2 159.0 521.0 171.0 Q517.8 159.0 512.4 150.6 Z" fill="#1460dc" stroke="#0a3a98" stroke-width="0.9"/>
<text x="521.0" y="148.5" fill="#0a1530" font-size="8.6" font-weight="bold" text-anchor="middle" letter-spacing="0.2">45</text>
<path d="M558.4 152.6 A9.3 9.3 0 1 1 575.6 152.6 Q570.2 161.0 567.0 173.0 Q563.8 161.0 558.4 152.6 Z" fill="#1460dc" stroke="#0a3a98" stroke-width="0.9"/>
<text x="567.0" y="150.5" fill="#0a1530" font-size="8.6" font-weight="bold" text-anchor="middle" letter-spacing="0.2">53</text>
<path d="M293.4 163.6 A9.3 9.3 0 1 1 310.6 163.6 Q305.2 172.0 302.0 184.0 Q298.8 172.0 293.4 163.6 Z" fill="#1460dc" stroke="#0a3a98" stroke-width="0.9"/>
<text x="302.0" y="161.5" fill="#0a1530" font-size="8.6" font-weight="bold" text-anchor="middle" letter-spacing="0.2">39</text>
<path d="M314.4 168.6 A9.3 9.3 0 1 1 331.6 168.6 Q326.2 177.0 323.0 189.0 Q319.8 177.0 314.4 168.6 Z" fill="#1460dc" stroke="#0a3a98" stroke-width="0.9"/>
<text x="323.0" y="166.5" fill="#0a1530" font-size="8.6" font-weight="bold" text-anchor="middle" letter-spacing="0.2">29</text>
<path d="M511.4 173.6 A9.3 9.3 0 1 1 528.6 173.6 Q523.2 182.0 520.0 194.0 Q516.8 182.0 511.4 173.6 Z" fill="#1460dc" stroke="#0a3a98" stroke-width="0.9"/>
<text x="520.0" y="171.5" fill="#0a1530" font-size="8.6" font-weight="bold" text-anchor="middle" letter-spacing="0.2">9</text>
<path d="M503.4 174.6 A9.3 9.3 0 1 1 520.6 174.6 Q515.2 183.0 512.0 195.0 Q508.8 183.0 503.4 174.6 Z" fill="#1460dc" stroke="#0a3a98" stroke-width="0.9"/>
<text x="512.0" y="172.5" fill="#0a1530" font-size="8.6" font-weight="bold" text-anchor="middle" letter-spacing="0.2">50</text>
<path d="M441.4 179.6 A9.3 9.3 0 1 1 458.6 179.6 Q453.2 188.0 450.0 200.0 Q446.8 188.0 441.4 179.6 Z" fill="#1460dc" stroke="#0a3a98" stroke-width="0.9"/>
<text x="450.0" y="177.5" fill="#0a1530" font-size="8.6" font-weight="bold" text-anchor="middle" letter-spacing="0.2">22</text>
<path d="M490.4 179.6 A9.3 9.3 0 1 1 507.6 179.6 Q502.2 188.0 499.0 200.0 Q495.8 188.0 490.4 179.6 Z" fill="#1460dc" stroke="#0a3a98" stroke-width="0.9"/>
<text x="499.0" y="177.5" fill="#0a1530" font-size="8.6" font-weight="bold" text-anchor="middle" letter-spacing="0.2">36</text>
<path d="M400.4 185.6 A9.3 9.3 0 1 1 417.6 185.6 Q412.2 194.0 409.0 206.0 Q405.8 194.0 400.4 185.6 Z" fill="#1460dc" stroke="#0a3a98" stroke-width="0.9"/>
<text x="409.0" y="183.5" fill="#0a1530" font-size="8.6" font-weight="bold" text-anchor="middle" letter-spacing="0.2">19</text>
<path d="M448.4 186.6 A9.3 9.3 0 1 1 465.6 186.6 Q460.2 195.0 457.0 207.0 Q453.8 195.0 448.4 186.6 Z" fill="#1460dc" stroke="#0a3a98" stroke-width="0.9"/>
<text x="457.0" y="184.5" fill="#0a1530" font-size="8.6" font-weight="bold" text-anchor="middle" letter-spacing="0.2">6</text>
<path d="M449.4 190.6 A9.3 9.3 0 1 1 466.6 190.6 Q461.2 199.0 458.0 211.0 Q454.8 199.0 449.4 190.6 Z" fill="#1460dc" stroke="#0a3a98" stroke-width="0.9"/>
<text x="458.0" y="188.5" fill="#0a1530" font-size="8.6" font-weight="bold" text-anchor="middle" letter-spacing="0.2">7</text>
<path d="M399.4 191.6 A9.3 9.3 0 1 1 416.6 191.6 Q411.2 200.0 408.0 212.0 Q404.8 200.0 399.4 191.6 Z" fill="#1460dc" stroke="#0a3a98" stroke-width="0.9"/>
<text x="408.0" y="189.5" fill="#0a1530" font-size="8.6" font-weight="bold" text-anchor="middle" letter-spacing="0.2">4</text>
<path d="M577.4 191.6 A9.3 9.3 0 1 1 594.6 191.6 Q589.2 200.0 586.0 212.0 Q582.8 200.0 577.4 191.6 Z" fill="#1460dc" stroke="#0a3a98" stroke-width="0.9"/>
<text x="586.0" y="189.5" fill="#0a1530" font-size="8.6" font-weight="bold" text-anchor="middle" letter-spacing="0.2">54</text>
<path d="M474.4 197.6 A9.3 9.3 0 1 1 491.6 197.6 Q486.2 206.0 483.0 218.0 Q479.8 206.0 474.4 197.6 Z" fill="#1460dc" stroke="#0a3a98" stroke-width="0.9"/>
<text x="483.0" y="195.5" fill="#0a1530" font-size="8.6" font-weight="bold" text-anchor="middle" letter-spacing="0.2">28</text>
<path d="M383.4 202.6 A9.3 9.3 0 1 1 400.6 202.6 Q395.2 211.0 392.0 223.0 Q388.8 211.0 383.4 202.6 Z" fill="#1460dc" stroke="#0a3a98" stroke-width="0.9"/>
<text x="392.0" y="200.5" fill="#0a1530" font-size="8.6" font-weight="bold" text-anchor="middle" letter-spacing="0.2">5</text>
<path d="M548.4 203.6 A9.3 9.3 0 1 1 565.6 203.6 Q560.2 212.0 557.0 224.0 Q553.8 212.0 548.4 203.6 Z" fill="#1460dc" stroke="#0a3a98" stroke-width="0.9"/>
<text x="557.0" y="201.5" fill="#0a1530" font-size="8.6" font-weight="bold" text-anchor="middle" letter-spacing="0.2">55</text>
<path d="M565.4 203.6 A9.3 9.3 0 1 1 582.6 203.6 Q577.2 212.0 574.0 224.0 Q570.8 212.0 565.4 203.6 Z" fill="#1460dc" stroke="#0a3a98" stroke-width="0.9"/>
<text x="574.0" y="201.5" fill="#0a1530" font-size="8.6" font-weight="bold" text-anchor="middle" letter-spacing="0.2">16</text>
<path d="M484.4 206.6 A9.3 9.3 0 1 1 501.6 206.6 Q496.2 215.0 493.0 227.0 Q489.8 215.0 484.4 206.6 Z" fill="#1460dc" stroke="#0a3a98" stroke-width="0.9"/>
<text x="493.0" y="204.5" fill="#0a1530" font-size="8.6" font-weight="bold" text-anchor="middle" letter-spacing="0.2">44</text>
<path d="M341.4 220.6 A9.3 9.3 0 1 1 358.6 220.6 Q353.2 229.0 350.0 241.0 Q346.8 229.0 341.4 220.6 Z" fill="#1460dc" stroke="#0a3a98" stroke-width="0.9"/>
<text x="350.0" y="218.5" fill="#0a1530" font-size="8.6" font-weight="bold" text-anchor="middle" letter-spacing="0.2">23</text>
<path d="M515.4 226.6 A9.3 9.3 0 1 1 532.6 226.6 Q527.2 235.0 524.0 247.0 Q520.8 235.0 515.4 226.6 Z" fill="#1460dc" stroke="#0a3a98" stroke-width="0.9"/>
<text x="524.0" y="224.5" fill="#0a1530" font-size="8.6" font-weight="bold" text-anchor="middle" letter-spacing="0.2">41</text>
<path d="M431.4 230.6 A9.3 9.3 0 1 1 448.6 230.6 Q443.2 239.0 440.0 251.0 Q436.8 239.0 431.4 230.6 Z" fill="#1460dc" stroke="#0a3a98" stroke-width="0.9"/>
<text x="440.0" y="228.5" fill="#0a1530" font-size="8.6" font-weight="bold" text-anchor="middle" letter-spacing="0.2">38</text>
<path d="M461.4 235.6 A9.3 9.3 0 1 1 478.6 235.6 Q473.2 244.0 470.0 256.0 Q466.8 244.0 461.4 235.6 Z" fill="#1460dc" stroke="#0a3a98" stroke-width="0.9"/>
<text x="470.0" y="233.5" fill="#0a1530" font-size="8.6" font-weight="bold" text-anchor="middle" letter-spacing="0.2">31</text>
<path d="M366.4 236.6 A9.3 9.3 0 1 1 383.6 236.6 Q378.2 245.0 375.0 257.0 Q371.8 245.0 366.4 236.6 Z" fill="#1460dc" stroke="#0a3a98" stroke-width="0.9"/>
<text x="375.0" y="234.5" fill="#0a1530" font-size="8.6" font-weight="bold" text-anchor="middle" letter-spacing="0.2">40</text>
<path d="M516.4 241.6 A9.3 9.3 0 1 1 533.6 241.6 Q528.2 250.0 525.0 262.0 Q521.8 250.0 516.4 241.6 Z" fill="#1460dc" stroke="#0a3a98" stroke-width="0.9"/>
<text x="525.0" y="239.5" fill="#0a1530" font-size="8.6" font-weight="bold" text-anchor="middle" letter-spacing="0.2">56</text>
<path d="M467.4 249.6 A9.3 9.3 0 1 1 484.6 249.6 Q479.2 258.0 476.0 270.0 Q472.8 258.0 467.4 249.6 Z" fill="#1460dc" stroke="#0a3a98" stroke-width="0.9"/>
<text x="476.0" y="247.5" fill="#0a1530" font-size="8.6" font-weight="bold" text-anchor="middle" letter-spacing="0.2">37</text>
<path d="M447.4 281.6 A9.3 9.3 0 1 1 464.6 281.6 Q459.2 290.0 456.0 302.0 Q452.8 290.0 447.4 281.6 Z" fill="#1460dc" stroke="#0a3a98" stroke-width="0.9"/>
<text x="456.0" y="279.5" fill="#0a1530" font-size="8.6" font-weight="bold" text-anchor="middle" letter-spacing="0.2">2</text>
<path d="M496.4 303.6 A9.3 9.3 0 1 1 513.6 303.6 Q508.2 312.0 505.0 324.0 Q501.8 312.0 496.4 303.6 Z" fill="#1460dc" stroke="#0a3a98" stroke-width="0.9"/>
<text x="505.0" y="301.5" fill="#0a1530" font-size="8.6" font-weight="bold" text-anchor="middle" letter-spacing="0.2">8</text>
<path d="M496.4 342.6 A9.3 9.3 0 1 1 513.6 342.6 Q508.2 351.0 505.0 363.0 Q501.8 351.0 496.4 342.6 Z" fill="#1460dc" stroke="#0a3a98" stroke-width="0.9"/>
<text x="505.0" y="340.5" fill="#0a1530" font-size="8.6" font-weight="bold" text-anchor="middle" letter-spacing="0.2">49</text>
<rect x="10" y="10" width="168" height="40" rx="2" fill="#fff" style="filter:drop-shadow(0 1px 2px rgba(0,0,0,.3))"/>
<line x1="79" y1="10" x2="79" y2="50" stroke="#e6e6e6" stroke-width="1"/>
<text x="27" y="36" fill="#000" font-size="17" font-weight="bold">Map</text>
<text x="96" y="36" fill="#565656" font-size="17.5">Satellite</text>
<rect x="910" y="10" width="40" height="40" rx="2" fill="#fff" style="filter:drop-shadow(0 1px 2px rgba(0,0,0,.3))"/>
<path d="M921 26 V21 H926 M934 21 H939 V26 M939 34 V39 H934 M926 39 H921 V34" stroke="#666" stroke-width="2.2" fill="none"/>
<circle cx="930" cy="333.5" r="20" fill="#fff" style="filter:drop-shadow(0 1px 2px rgba(0,0,0,.3))"/>
<path d="M926 323 L930 319 L934 323 M926 344 L930 348 L934 344 M920 329.5 L916 333.5 L920 337.5 M940 329.5 L944 333.5 L940 337.5" stroke="#666" stroke-width="2.2" fill="none"/>
<rect x="910" y="386" width="40" height="40" rx="2" fill="#fff" style="filter:drop-shadow(0 1px 2px rgba(0,0,0,.3))"/>
<circle cx="930" cy="398" r="5" fill="#fbbc04" stroke="#e3a100" stroke-width="0.6"/><path d="M924 404 H936 L938 414 H935 V422 H931 V415 H929 V422 H925 V414 H922 Z" fill="#fbbc04" stroke="#e3a100" stroke-width="0.6"/><path d="M928 404 L930 408 L932 404 Z" fill="#e8453c"/>
<text x="10" y="443" font-size="17" font-weight="bold" stroke="#fff" stroke-width="2.5" paint-order="stroke"><tspan fill="#4285f4">G</tspan><tspan fill="#ea4335">o</tspan><tspan fill="#fbbc05">o</tspan><tspan fill="#4285f4">g</tspan><tspan fill="#34a853">l</tspan><tspan fill="#ea4335">e</tspan></text>
<rect x="508" y="436" width="452" height="14" fill="#f5f5f5" opacity="0.8"/>
<text x="514" y="447" fill="#222" font-size="9.6">Keyboard shortcuts</text>
<text x="612" y="447" fill="#222" font-size="9.6">Map data ©2026 Google, Inst. Geogr. Nacional</text>
<text x="830" y="447" fill="#222" font-size="9.6">Terms</text>
<text x="870" y="447" fill="#222" font-size="9.6">Report a map error</text>
</svg>
</div>
</body></html>
